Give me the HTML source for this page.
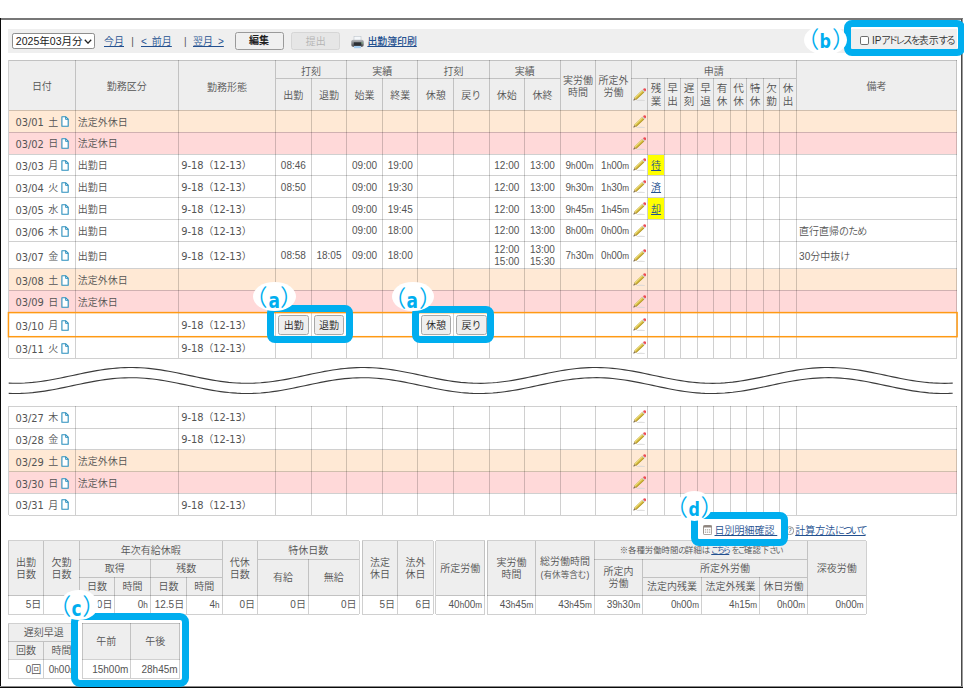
<!DOCTYPE html>
<html lang="ja"><head><meta charset="utf-8"><title>出勤簿</title>
<style>
html,body{margin:0;padding:0;background:#fff;}
body{width:964px;height:688px;position:relative;overflow:hidden;font-family:"Liberation Sans","Noto Sans CJK JP",sans-serif;font-size:10px;color:#545454;font-weight:350;}
.r{position:absolute;}
.t{position:absolute;white-space:nowrap;overflow:visible;font-size:10px;color:#545454;}
.t i{font-style:normal;font-size:8.2px;}
.t.n{font-size:10px;color:#545454;}
.dt{font-family:"DejaVu Sans","Noto Sans CJK JP",sans-serif;font-size:9.9px;letter-spacing:-0.05px;position:relative;top:0.9px;font-weight:400;}
.lk,.lk u{color:#23508f;}
.ml{display:inline-block;vertical-align:middle;line-height:12px;}
.ml.v{line-height:13.4px;font-size:10.6px;}
.ic{position:absolute;line-height:0;}
.sel{position:absolute;box-sizing:border-box;border:1px solid #8e8e8e;border-radius:2.2px;background:#fff;color:#1a1a1a;font-size:10.55px;font-weight:400;line-height:15px;padding-left:2.4px;white-space:nowrap;}
.btn{position:absolute;box-sizing:border-box;border:1px solid #9a9a9a;border-radius:2.5px;background:#f0f0f0;color:#222;font-size:10px;text-align:center;white-space:nowrap;}
.btn.dis{color:#b4b4b4;border-color:#d6d6d6;background:#e6e6e6;}
.btn.sm{border-color:#a8a8a8;background:#efefef;}
.pa{font-feature-settings:"palt";}
.k{letter-spacing:-1.3px;}
.k2{letter-spacing:-1.4px;}
.hl{position:absolute;box-sizing:border-box;border-style:solid;border-color:#00aeef;}
.lb{position:absolute;background:#fff;border-radius:50%;}
.lt{position:absolute;text-align:center;color:#00aeef;white-space:nowrap;font-size:20px;}
.lt b{font-family:"DejaVu Sans Condensed","DejaVu Sans",sans-serif;font-weight:bold;font-size:20.5px;display:inline-block;position:relative;transform:scaleX(0.92);margin:0 0.1px;}
.lt .p{font-family:"Noto Sans CJK JP",sans-serif;font-weight:350;font-size:23px;display:inline-block;position:relative;top:-1.2px;}
.lt .p.l{margin-left:-12px;}
.lt .p.r{margin-right:-12px;}
</style></head><body>
<div class="r" style="left:0.00px;top:18.00px;width:963.00px;height:2.00px;background:#777;"></div>
<div class="r" style="left:0.00px;top:18.00px;width:1.00px;height:670.00px;background:#0a0a0a;"></div>
<div class="r" style="left:961.00px;top:19.00px;width:1.00px;height:669.00px;background:#4a4a4a;"></div>
<div class="r" style="left:962.00px;top:19.00px;width:1.00px;height:669.00px;background:#9c9c9c;"></div>
<div class="r" style="left:0.00px;top:686.00px;width:963.00px;height:1.00px;background:#8a8a8a;"></div>
<div class="r" style="left:0.00px;top:687.00px;width:963.00px;height:1.00px;background:#0a0a0a;"></div>
<div class="r" style="left:8.30px;top:29.20px;width:949.00px;height:23.60px;background:#efefef;"></div>
<div class="sel" style="left:12.4px;top:33.2px;width:83px;height:15.4px"><span>2025年03月分</span><svg viewBox="0 0 9 6" width="8" height="5.4" style="position:absolute;right:2.6px;top:4.6px"><path d="M0.9 0.9 L4.5 4.6 L8.1 0.9" fill="none" stroke="#222" stroke-width="1.5"/></svg></div>
<div class="t lk" style="left:104.00px;top:33.60px;width:22.00px;height:16.00px;line-height:16.00px;text-align:left;"><u>今月</u></div>
<div class="t " style="left:131.20px;top:33.60px;width:8.00px;height:16.00px;line-height:16.00px;text-align:left;">|</div>
<div class="t lk" style="left:141.00px;top:33.60px;width:32.00px;height:16.00px;line-height:16.00px;text-align:left;word-spacing:2.2px"><u>&lt; 前月</u></div>
<div class="t " style="left:184.00px;top:33.60px;width:8.00px;height:16.00px;line-height:16.00px;text-align:left;">|</div>
<div class="t lk" style="left:193.00px;top:33.60px;width:34.00px;height:16.00px;line-height:16.00px;text-align:left;word-spacing:2.2px"><u>翌月 &gt;</u></div>
<div class="btn" style="left:234.6px;top:32.4px;width:49px;height:17.2px;line-height:16.6px"><b>編集</b></div>
<div class="btn dis" style="left:291.2px;top:32.4px;width:49.3px;height:17.2px;line-height:17.4px">提出</div>
<svg style="position:absolute;left:351px;top:35.6px" width="13" height="13" viewBox="0 0 13 13"><defs><linearGradient id="pg" x1="0" y1="0" x2="0" y2="1"><stop offset="0" stop-color="#b9bcc0"/><stop offset="1" stop-color="#474a4f"/></linearGradient></defs><rect x="3" y="0.3" width="7" height="4.2" fill="#f4f7fa" stroke="#b4bcc4" stroke-width="0.5"/><rect x="0.3" y="3.7" width="12.4" height="7" rx="1.7" fill="url(#pg)"/><rect x="2.8" y="6.3" width="7.6" height="3.3" fill="#2c2f34"/><rect x="3" y="10" width="7" height="2.2" fill="#a6cdf0"/><circle cx="11" cy="7" r="0.6" fill="#6fdc6f"/></svg>
<div class="t lk" style="left:367.40px;top:34.20px;width:60.00px;height:16.00px;line-height:16.00px;text-align:left;font-size:9.9px;font-weight:500"><u>出勤簿印刷</u></div>
<div class="r" style="left:8.75px;top:60.20px;width:948.05px;height:50.10px;background:#eeeeee;"></div>
<div class="r" style="left:8.75px;top:59.70px;width:948.05px;height:1.00px;background:rgba(0,0,0,0.185);"></div>
<div class="r" style="left:8.75px;top:109.80px;width:948.05px;height:1.00px;background:rgba(0,0,0,0.185);"></div>
<div class="r" style="left:8.25px;top:60.20px;width:1.00px;height:50.10px;background:rgba(0,0,0,0.185);"></div>
<div class="r" style="left:74.50px;top:60.20px;width:1.00px;height:50.10px;background:rgba(0,0,0,0.185);"></div>
<div class="r" style="left:178.00px;top:60.20px;width:1.00px;height:50.10px;background:rgba(0,0,0,0.185);"></div>
<div class="r" style="left:275.00px;top:60.20px;width:1.00px;height:50.10px;background:rgba(0,0,0,0.185);"></div>
<div class="r" style="left:346.20px;top:60.20px;width:1.00px;height:50.10px;background:rgba(0,0,0,0.185);"></div>
<div class="r" style="left:417.40px;top:60.20px;width:1.00px;height:50.10px;background:rgba(0,0,0,0.185);"></div>
<div class="r" style="left:488.60px;top:60.20px;width:1.00px;height:50.10px;background:rgba(0,0,0,0.185);"></div>
<div class="r" style="left:559.80px;top:60.20px;width:1.00px;height:50.10px;background:rgba(0,0,0,0.185);"></div>
<div class="r" style="left:595.30px;top:60.20px;width:1.00px;height:50.10px;background:rgba(0,0,0,0.185);"></div>
<div class="r" style="left:630.90px;top:60.20px;width:1.00px;height:50.10px;background:rgba(0,0,0,0.185);"></div>
<div class="r" style="left:795.80px;top:60.20px;width:1.00px;height:50.10px;background:rgba(0,0,0,0.185);"></div>
<div class="r" style="left:956.30px;top:60.20px;width:1.00px;height:50.10px;background:rgba(0,0,0,0.185);"></div>
<div class="r" style="left:310.70px;top:78.40px;width:1.00px;height:31.90px;background:rgba(0,0,0,0.185);"></div>
<div class="r" style="left:382.00px;top:78.40px;width:1.00px;height:31.90px;background:rgba(0,0,0,0.185);"></div>
<div class="r" style="left:453.10px;top:78.40px;width:1.00px;height:31.90px;background:rgba(0,0,0,0.185);"></div>
<div class="r" style="left:524.00px;top:78.40px;width:1.00px;height:31.90px;background:rgba(0,0,0,0.185);"></div>
<div class="r" style="left:647.40px;top:78.40px;width:1.00px;height:31.90px;background:rgba(0,0,0,0.185);"></div>
<div class="r" style="left:663.80px;top:78.40px;width:1.00px;height:31.90px;background:rgba(0,0,0,0.185);"></div>
<div class="r" style="left:680.20px;top:78.40px;width:1.00px;height:31.90px;background:rgba(0,0,0,0.185);"></div>
<div class="r" style="left:696.80px;top:78.40px;width:1.00px;height:31.90px;background:rgba(0,0,0,0.185);"></div>
<div class="r" style="left:713.10px;top:78.40px;width:1.00px;height:31.90px;background:rgba(0,0,0,0.185);"></div>
<div class="r" style="left:729.80px;top:78.40px;width:1.00px;height:31.90px;background:rgba(0,0,0,0.185);"></div>
<div class="r" style="left:746.30px;top:78.40px;width:1.00px;height:31.90px;background:rgba(0,0,0,0.185);"></div>
<div class="r" style="left:762.90px;top:78.40px;width:1.00px;height:31.90px;background:rgba(0,0,0,0.185);"></div>
<div class="r" style="left:779.30px;top:78.40px;width:1.00px;height:31.90px;background:rgba(0,0,0,0.185);"></div>
<div class="r" style="left:275.50px;top:77.90px;width:284.80px;height:1.00px;background:rgba(0,0,0,0.185);"></div>
<div class="r" style="left:631.40px;top:77.90px;width:164.90px;height:1.00px;background:rgba(0,0,0,0.185);"></div>
<div class="t " style="left:8.75px;top:62.20px;width:66.25px;height:50.10px;line-height:50.10px;text-align:center;">日付</div>
<div class="t " style="left:75.00px;top:62.20px;width:103.50px;height:50.10px;line-height:50.10px;text-align:center;">勤務区分</div>
<div class="t " style="left:178.50px;top:62.50px;width:97.00px;height:50.10px;line-height:50.10px;text-align:center;">勤務形態</div>
<div class="t " style="left:275.50px;top:62.70px;width:71.20px;height:18.20px;line-height:18.20px;text-align:center;">打刻</div>
<div class="t " style="left:346.70px;top:62.70px;width:71.20px;height:18.20px;line-height:18.20px;text-align:center;">実績</div>
<div class="t " style="left:417.90px;top:62.70px;width:71.20px;height:18.20px;line-height:18.20px;text-align:center;">打刻</div>
<div class="t " style="left:489.10px;top:62.70px;width:71.20px;height:18.20px;line-height:18.20px;text-align:center;">実績</div>
<div class="t " style="left:275.50px;top:79.70px;width:35.70px;height:31.90px;line-height:31.90px;text-align:center;">出勤</div>
<div class="t " style="left:311.20px;top:79.70px;width:35.50px;height:31.90px;line-height:31.90px;text-align:center;">退勤</div>
<div class="t " style="left:346.70px;top:79.70px;width:35.80px;height:31.90px;line-height:31.90px;text-align:center;">始業</div>
<div class="t " style="left:382.50px;top:79.70px;width:35.40px;height:31.90px;line-height:31.90px;text-align:center;">終業</div>
<div class="t " style="left:417.90px;top:79.70px;width:35.70px;height:31.90px;line-height:31.90px;text-align:center;">休憩</div>
<div class="t " style="left:453.60px;top:79.70px;width:35.50px;height:31.90px;line-height:31.90px;text-align:center;">戻り</div>
<div class="t " style="left:489.10px;top:79.70px;width:35.40px;height:31.90px;line-height:31.90px;text-align:center;">休始</div>
<div class="t " style="left:524.50px;top:79.70px;width:35.80px;height:31.90px;line-height:31.90px;text-align:center;">休終</div>
<div class="t " style="left:560.30px;top:61.20px;width:35.50px;height:50.10px;line-height:50.10px;text-align:center;"><span class="ml">実労働<br>時間</span></div>
<div class="t " style="left:595.80px;top:61.20px;width:35.60px;height:50.10px;line-height:50.10px;text-align:center;"><span class="ml">所定外<br>労働</span></div>
<div class="t " style="left:631.40px;top:62.70px;width:164.90px;height:18.20px;line-height:18.20px;text-align:center;">申請</div>
<div class="ic" style="left:632.60px;top:87.55px"><svg class="pen" viewBox="0 0 13 13" width="13" height="13"><ellipse cx="7.8" cy="12.25" rx="4.4" ry="0.6" fill="#d6d6d6"/><g transform="translate(0.5,12.4) rotate(-43.5)"><path d="M0 0 L2.7 -1.4 V1.4 Z" fill="#b2945c"/><path d="M0 0 L1.2 -0.62 V0.62 Z" fill="#444"/><rect x="2.7" y="-1.4" width="10.6" height="2.8" fill="#d8bf3f" stroke="#a48d2c" stroke-width="0.25"/><rect x="2.7" y="-1.4" width="10.6" height="0.9" fill="#ecdc82"/><rect x="2.7" y="0.6" width="10.6" height="0.8" fill="#b0962a"/><rect x="13.3" y="-1.45" width="1.2" height="2.9" fill="#c9c9c9"/><path d="M14.5 -1.45 H15.6 Q17 -1.45 17 0 Q17 1.45 15.6 1.45 H14.5 Z" fill="#ee4a52"/></g></svg></div>
<div class="t " style="left:647.90px;top:79.00px;width:16.40px;height:31.90px;line-height:31.90px;text-align:center;"><span class="ml v">残<br>業</span></div>
<div class="t " style="left:664.30px;top:79.00px;width:16.40px;height:31.90px;line-height:31.90px;text-align:center;"><span class="ml v">早<br>出</span></div>
<div class="t " style="left:680.70px;top:79.00px;width:16.60px;height:31.90px;line-height:31.90px;text-align:center;"><span class="ml v">遅<br>刻</span></div>
<div class="t " style="left:697.30px;top:79.00px;width:16.30px;height:31.90px;line-height:31.90px;text-align:center;"><span class="ml v">早<br>退</span></div>
<div class="t " style="left:713.60px;top:79.00px;width:16.70px;height:31.90px;line-height:31.90px;text-align:center;"><span class="ml v">有<br>休</span></div>
<div class="t " style="left:730.30px;top:79.00px;width:16.50px;height:31.90px;line-height:31.90px;text-align:center;"><span class="ml v">代<br>休</span></div>
<div class="t " style="left:746.80px;top:79.00px;width:16.60px;height:31.90px;line-height:31.90px;text-align:center;"><span class="ml v">特<br>休</span></div>
<div class="t " style="left:763.40px;top:79.00px;width:16.40px;height:31.90px;line-height:31.90px;text-align:center;"><span class="ml v">欠<br>勤</span></div>
<div class="t " style="left:779.80px;top:79.00px;width:16.50px;height:31.90px;line-height:31.90px;text-align:center;"><span class="ml v">休<br>出</span></div>
<div class="t " style="left:796.30px;top:62.20px;width:160.50px;height:50.10px;line-height:50.10px;text-align:center;">備考</div>
<div class="r" style="left:8.75px;top:110.30px;width:948.05px;height:21.90px;background:#ffe9d5;"></div>
<div class="t " style="left:15.55px;top:111.50px;width:60.00px;height:21.90px;line-height:21.90px;text-align:left;"><span class="dt">03/01</span><span style="margin-left:4.6px">土</span></div>
<div class="ic" style="left:61px;top:116.35px"><svg class="doc" viewBox="0 0 8 11" width="8" height="11"><path d="M0.9 0.8 H4.8 L7.2 3.2 V10.2 H0.9 Z" fill="#fff" stroke="#2a8fbd" stroke-width="1.1" stroke-linejoin="round"/><path d="M4.6 0.8 V3.4 H7.2" fill="none" stroke="#2a8fbd" stroke-width="0.9"/></svg></div>
<div class="t " style="left:77.80px;top:111.50px;width:100.00px;height:21.90px;line-height:21.90px;text-align:left;">法定外休日</div>
<div class="ic" style="left:632.60px;top:114.65px"><svg class="pen" viewBox="0 0 13 13" width="13" height="13"><ellipse cx="7.8" cy="12.25" rx="4.4" ry="0.6" fill="#d6d6d6"/><g transform="translate(0.5,12.4) rotate(-43.5)"><path d="M0 0 L2.7 -1.4 V1.4 Z" fill="#b2945c"/><path d="M0 0 L1.2 -0.62 V0.62 Z" fill="#444"/><rect x="2.7" y="-1.4" width="10.6" height="2.8" fill="#d8bf3f" stroke="#a48d2c" stroke-width="0.25"/><rect x="2.7" y="-1.4" width="10.6" height="0.9" fill="#ecdc82"/><rect x="2.7" y="0.6" width="10.6" height="0.8" fill="#b0962a"/><rect x="13.3" y="-1.45" width="1.2" height="2.9" fill="#c9c9c9"/><path d="M14.5 -1.45 H15.6 Q17 -1.45 17 0 Q17 1.45 15.6 1.45 H14.5 Z" fill="#ee4a52"/></g></svg></div>
<div class="r" style="left:8.75px;top:132.20px;width:948.05px;height:21.80px;background:#ffd9d9;"></div>
<div class="t " style="left:15.55px;top:133.40px;width:60.00px;height:21.80px;line-height:21.80px;text-align:left;"><span class="dt">03/02</span><span style="margin-left:4.6px">日</span></div>
<div class="ic" style="left:61px;top:138.20px"><svg class="doc" viewBox="0 0 8 11" width="8" height="11"><path d="M0.9 0.8 H4.8 L7.2 3.2 V10.2 H0.9 Z" fill="#fff" stroke="#2a8fbd" stroke-width="1.1" stroke-linejoin="round"/><path d="M4.6 0.8 V3.4 H7.2" fill="none" stroke="#2a8fbd" stroke-width="0.9"/></svg></div>
<div class="t " style="left:77.80px;top:133.40px;width:100.00px;height:21.80px;line-height:21.80px;text-align:left;">法定休日</div>
<div class="ic" style="left:632.60px;top:136.50px"><svg class="pen" viewBox="0 0 13 13" width="13" height="13"><ellipse cx="7.8" cy="12.25" rx="4.4" ry="0.6" fill="#d6d6d6"/><g transform="translate(0.5,12.4) rotate(-43.5)"><path d="M0 0 L2.7 -1.4 V1.4 Z" fill="#b2945c"/><path d="M0 0 L1.2 -0.62 V0.62 Z" fill="#444"/><rect x="2.7" y="-1.4" width="10.6" height="2.8" fill="#d8bf3f" stroke="#a48d2c" stroke-width="0.25"/><rect x="2.7" y="-1.4" width="10.6" height="0.9" fill="#ecdc82"/><rect x="2.7" y="0.6" width="10.6" height="0.8" fill="#b0962a"/><rect x="13.3" y="-1.45" width="1.2" height="2.9" fill="#c9c9c9"/><path d="M14.5 -1.45 H15.6 Q17 -1.45 17 0 Q17 1.45 15.6 1.45 H14.5 Z" fill="#ee4a52"/></g></svg></div>
<div class="r" style="left:8.75px;top:154.00px;width:948.05px;height:21.90px;background:#fff;"></div>
<div class="t " style="left:15.55px;top:155.20px;width:60.00px;height:21.90px;line-height:21.90px;text-align:left;"><span class="dt">03/03</span><span style="margin-left:4.6px">月</span></div>
<div class="ic" style="left:61px;top:160.05px"><svg class="doc" viewBox="0 0 8 11" width="8" height="11"><path d="M0.9 0.8 H4.8 L7.2 3.2 V10.2 H0.9 Z" fill="#fff" stroke="#2a8fbd" stroke-width="1.1" stroke-linejoin="round"/><path d="M4.6 0.8 V3.4 H7.2" fill="none" stroke="#2a8fbd" stroke-width="0.9"/></svg></div>
<div class="t " style="left:77.80px;top:155.20px;width:100.00px;height:21.90px;line-height:21.90px;text-align:left;">出勤日</div>
<div class="t " style="left:181.30px;top:154.30px;width:100.00px;height:21.90px;line-height:21.90px;text-align:left;"><span class="dt">9-18（12-13）</span></div>
<div class="ic" style="left:632.60px;top:158.35px"><svg class="pen" viewBox="0 0 13 13" width="13" height="13"><ellipse cx="7.8" cy="12.25" rx="4.4" ry="0.6" fill="#d6d6d6"/><g transform="translate(0.5,12.4) rotate(-43.5)"><path d="M0 0 L2.7 -1.4 V1.4 Z" fill="#b2945c"/><path d="M0 0 L1.2 -0.62 V0.62 Z" fill="#444"/><rect x="2.7" y="-1.4" width="10.6" height="2.8" fill="#d8bf3f" stroke="#a48d2c" stroke-width="0.25"/><rect x="2.7" y="-1.4" width="10.6" height="0.9" fill="#ecdc82"/><rect x="2.7" y="0.6" width="10.6" height="0.8" fill="#b0962a"/><rect x="13.3" y="-1.45" width="1.2" height="2.9" fill="#c9c9c9"/><path d="M14.5 -1.45 H15.6 Q17 -1.45 17 0 Q17 1.45 15.6 1.45 H14.5 Z" fill="#ee4a52"/></g></svg></div>
<div class="t n" style="left:275.50px;top:154.70px;width:35.70px;height:21.90px;line-height:21.90px;text-align:center;">08:46</div>
<div class="t n" style="left:346.70px;top:154.70px;width:35.80px;height:21.90px;line-height:21.90px;text-align:center;">09:00</div>
<div class="t n" style="left:382.50px;top:154.70px;width:35.40px;height:21.90px;line-height:21.90px;text-align:center;">19:00</div>
<div class="t n" style="left:489.10px;top:154.70px;width:35.40px;height:21.90px;line-height:21.90px;text-align:center;">12:00</div>
<div class="t n" style="left:524.50px;top:154.70px;width:35.80px;height:21.90px;line-height:21.90px;text-align:center;">13:00</div>
<div class="t n" style="left:560.30px;top:154.70px;width:33.30px;height:21.90px;line-height:21.90px;text-align:right;">9<i>h</i>00<i>m</i></div>
<div class="t n" style="left:595.80px;top:154.70px;width:33.40px;height:21.90px;line-height:21.90px;text-align:right;">1<i>h</i>00<i>m</i></div>
<div class="r" style="left:648.40px;top:154.50px;width:15.40px;height:20.90px;background:#ffff00;"></div>
<div class="t lk" style="left:647.90px;top:155.20px;width:16.40px;height:21.90px;line-height:21.90px;text-align:center;"><u>待</u></div>
<div class="r" style="left:8.75px;top:175.90px;width:948.05px;height:21.90px;background:#fff;"></div>
<div class="t " style="left:15.55px;top:177.10px;width:60.00px;height:21.90px;line-height:21.90px;text-align:left;"><span class="dt">03/04</span><span style="margin-left:4.6px">火</span></div>
<div class="ic" style="left:61px;top:181.95px"><svg class="doc" viewBox="0 0 8 11" width="8" height="11"><path d="M0.9 0.8 H4.8 L7.2 3.2 V10.2 H0.9 Z" fill="#fff" stroke="#2a8fbd" stroke-width="1.1" stroke-linejoin="round"/><path d="M4.6 0.8 V3.4 H7.2" fill="none" stroke="#2a8fbd" stroke-width="0.9"/></svg></div>
<div class="t " style="left:77.80px;top:177.10px;width:100.00px;height:21.90px;line-height:21.90px;text-align:left;">出勤日</div>
<div class="t " style="left:181.30px;top:176.20px;width:100.00px;height:21.90px;line-height:21.90px;text-align:left;"><span class="dt">9-18（12-13）</span></div>
<div class="ic" style="left:632.60px;top:180.25px"><svg class="pen" viewBox="0 0 13 13" width="13" height="13"><ellipse cx="7.8" cy="12.25" rx="4.4" ry="0.6" fill="#d6d6d6"/><g transform="translate(0.5,12.4) rotate(-43.5)"><path d="M0 0 L2.7 -1.4 V1.4 Z" fill="#b2945c"/><path d="M0 0 L1.2 -0.62 V0.62 Z" fill="#444"/><rect x="2.7" y="-1.4" width="10.6" height="2.8" fill="#d8bf3f" stroke="#a48d2c" stroke-width="0.25"/><rect x="2.7" y="-1.4" width="10.6" height="0.9" fill="#ecdc82"/><rect x="2.7" y="0.6" width="10.6" height="0.8" fill="#b0962a"/><rect x="13.3" y="-1.45" width="1.2" height="2.9" fill="#c9c9c9"/><path d="M14.5 -1.45 H15.6 Q17 -1.45 17 0 Q17 1.45 15.6 1.45 H14.5 Z" fill="#ee4a52"/></g></svg></div>
<div class="t n" style="left:275.50px;top:176.60px;width:35.70px;height:21.90px;line-height:21.90px;text-align:center;">08:50</div>
<div class="t n" style="left:346.70px;top:176.60px;width:35.80px;height:21.90px;line-height:21.90px;text-align:center;">09:00</div>
<div class="t n" style="left:382.50px;top:176.60px;width:35.40px;height:21.90px;line-height:21.90px;text-align:center;">19:30</div>
<div class="t n" style="left:489.10px;top:176.60px;width:35.40px;height:21.90px;line-height:21.90px;text-align:center;">12:00</div>
<div class="t n" style="left:524.50px;top:176.60px;width:35.80px;height:21.90px;line-height:21.90px;text-align:center;">13:00</div>
<div class="t n" style="left:560.30px;top:176.60px;width:33.30px;height:21.90px;line-height:21.90px;text-align:right;">9<i>h</i>30<i>m</i></div>
<div class="t n" style="left:595.80px;top:176.60px;width:33.40px;height:21.90px;line-height:21.90px;text-align:right;">1<i>h</i>30<i>m</i></div>
<div class="t lk" style="left:647.90px;top:177.10px;width:16.40px;height:21.90px;line-height:21.90px;text-align:center;"><u>済</u></div>
<div class="r" style="left:8.75px;top:197.80px;width:948.05px;height:21.90px;background:#fff;"></div>
<div class="t " style="left:15.55px;top:199.00px;width:60.00px;height:21.90px;line-height:21.90px;text-align:left;"><span class="dt">03/05</span><span style="margin-left:4.6px">水</span></div>
<div class="ic" style="left:61px;top:203.85px"><svg class="doc" viewBox="0 0 8 11" width="8" height="11"><path d="M0.9 0.8 H4.8 L7.2 3.2 V10.2 H0.9 Z" fill="#fff" stroke="#2a8fbd" stroke-width="1.1" stroke-linejoin="round"/><path d="M4.6 0.8 V3.4 H7.2" fill="none" stroke="#2a8fbd" stroke-width="0.9"/></svg></div>
<div class="t " style="left:77.80px;top:199.00px;width:100.00px;height:21.90px;line-height:21.90px;text-align:left;">出勤日</div>
<div class="t " style="left:181.30px;top:198.10px;width:100.00px;height:21.90px;line-height:21.90px;text-align:left;"><span class="dt">9-18（12-13）</span></div>
<div class="ic" style="left:632.60px;top:202.15px"><svg class="pen" viewBox="0 0 13 13" width="13" height="13"><ellipse cx="7.8" cy="12.25" rx="4.4" ry="0.6" fill="#d6d6d6"/><g transform="translate(0.5,12.4) rotate(-43.5)"><path d="M0 0 L2.7 -1.4 V1.4 Z" fill="#b2945c"/><path d="M0 0 L1.2 -0.62 V0.62 Z" fill="#444"/><rect x="2.7" y="-1.4" width="10.6" height="2.8" fill="#d8bf3f" stroke="#a48d2c" stroke-width="0.25"/><rect x="2.7" y="-1.4" width="10.6" height="0.9" fill="#ecdc82"/><rect x="2.7" y="0.6" width="10.6" height="0.8" fill="#b0962a"/><rect x="13.3" y="-1.45" width="1.2" height="2.9" fill="#c9c9c9"/><path d="M14.5 -1.45 H15.6 Q17 -1.45 17 0 Q17 1.45 15.6 1.45 H14.5 Z" fill="#ee4a52"/></g></svg></div>
<div class="t n" style="left:346.70px;top:198.50px;width:35.80px;height:21.90px;line-height:21.90px;text-align:center;">09:00</div>
<div class="t n" style="left:382.50px;top:198.50px;width:35.40px;height:21.90px;line-height:21.90px;text-align:center;">19:45</div>
<div class="t n" style="left:489.10px;top:198.50px;width:35.40px;height:21.90px;line-height:21.90px;text-align:center;">12:00</div>
<div class="t n" style="left:524.50px;top:198.50px;width:35.80px;height:21.90px;line-height:21.90px;text-align:center;">13:00</div>
<div class="t n" style="left:560.30px;top:198.50px;width:33.30px;height:21.90px;line-height:21.90px;text-align:right;">9<i>h</i>45<i>m</i></div>
<div class="t n" style="left:595.80px;top:198.50px;width:33.40px;height:21.90px;line-height:21.90px;text-align:right;">1<i>h</i>45<i>m</i></div>
<div class="r" style="left:648.40px;top:198.30px;width:15.40px;height:20.90px;background:#ffff00;"></div>
<div class="t lk" style="left:647.90px;top:199.00px;width:16.40px;height:21.90px;line-height:21.90px;text-align:center;"><u>却</u></div>
<div class="r" style="left:8.75px;top:219.70px;width:948.05px;height:21.80px;background:#fff;"></div>
<div class="t " style="left:15.55px;top:220.90px;width:60.00px;height:21.80px;line-height:21.80px;text-align:left;"><span class="dt">03/06</span><span style="margin-left:4.6px">木</span></div>
<div class="ic" style="left:61px;top:225.70px"><svg class="doc" viewBox="0 0 8 11" width="8" height="11"><path d="M0.9 0.8 H4.8 L7.2 3.2 V10.2 H0.9 Z" fill="#fff" stroke="#2a8fbd" stroke-width="1.1" stroke-linejoin="round"/><path d="M4.6 0.8 V3.4 H7.2" fill="none" stroke="#2a8fbd" stroke-width="0.9"/></svg></div>
<div class="t " style="left:77.80px;top:220.90px;width:100.00px;height:21.80px;line-height:21.80px;text-align:left;">出勤日</div>
<div class="t " style="left:181.30px;top:220.00px;width:100.00px;height:21.80px;line-height:21.80px;text-align:left;"><span class="dt">9-18（12-13）</span></div>
<div class="ic" style="left:632.60px;top:224.00px"><svg class="pen" viewBox="0 0 13 13" width="13" height="13"><ellipse cx="7.8" cy="12.25" rx="4.4" ry="0.6" fill="#d6d6d6"/><g transform="translate(0.5,12.4) rotate(-43.5)"><path d="M0 0 L2.7 -1.4 V1.4 Z" fill="#b2945c"/><path d="M0 0 L1.2 -0.62 V0.62 Z" fill="#444"/><rect x="2.7" y="-1.4" width="10.6" height="2.8" fill="#d8bf3f" stroke="#a48d2c" stroke-width="0.25"/><rect x="2.7" y="-1.4" width="10.6" height="0.9" fill="#ecdc82"/><rect x="2.7" y="0.6" width="10.6" height="0.8" fill="#b0962a"/><rect x="13.3" y="-1.45" width="1.2" height="2.9" fill="#c9c9c9"/><path d="M14.5 -1.45 H15.6 Q17 -1.45 17 0 Q17 1.45 15.6 1.45 H14.5 Z" fill="#ee4a52"/></g></svg></div>
<div class="t n" style="left:346.70px;top:220.40px;width:35.80px;height:21.80px;line-height:21.80px;text-align:center;">09:00</div>
<div class="t n" style="left:382.50px;top:220.40px;width:35.40px;height:21.80px;line-height:21.80px;text-align:center;">18:00</div>
<div class="t n" style="left:489.10px;top:220.40px;width:35.40px;height:21.80px;line-height:21.80px;text-align:center;">12:00</div>
<div class="t n" style="left:524.50px;top:220.40px;width:35.80px;height:21.80px;line-height:21.80px;text-align:center;">13:00</div>
<div class="t n" style="left:560.30px;top:220.40px;width:33.30px;height:21.80px;line-height:21.80px;text-align:right;">8<i>h</i>00<i>m</i></div>
<div class="t n" style="left:595.80px;top:220.40px;width:33.40px;height:21.80px;line-height:21.80px;text-align:right;">0<i>h</i>00<i>m</i></div>
<div class="t " style="left:799.10px;top:220.90px;width:150.00px;height:21.80px;line-height:21.80px;text-align:left;">直行直帰<span style="letter-spacing:-0.9px">のため</span></div>
<div class="r" style="left:8.75px;top:241.50px;width:948.05px;height:27.20px;background:#fff;"></div>
<div class="t " style="left:15.55px;top:242.70px;width:60.00px;height:27.20px;line-height:27.20px;text-align:left;"><span class="dt">03/07</span><span style="margin-left:4.6px">金</span></div>
<div class="ic" style="left:61px;top:250.20px"><svg class="doc" viewBox="0 0 8 11" width="8" height="11"><path d="M0.9 0.8 H4.8 L7.2 3.2 V10.2 H0.9 Z" fill="#fff" stroke="#2a8fbd" stroke-width="1.1" stroke-linejoin="round"/><path d="M4.6 0.8 V3.4 H7.2" fill="none" stroke="#2a8fbd" stroke-width="0.9"/></svg></div>
<div class="t " style="left:77.80px;top:242.70px;width:100.00px;height:27.20px;line-height:27.20px;text-align:left;">出勤日</div>
<div class="t " style="left:181.30px;top:241.80px;width:100.00px;height:27.20px;line-height:27.20px;text-align:left;"><span class="dt">9-18（12-13）</span></div>
<div class="ic" style="left:632.60px;top:248.50px"><svg class="pen" viewBox="0 0 13 13" width="13" height="13"><ellipse cx="7.8" cy="12.25" rx="4.4" ry="0.6" fill="#d6d6d6"/><g transform="translate(0.5,12.4) rotate(-43.5)"><path d="M0 0 L2.7 -1.4 V1.4 Z" fill="#b2945c"/><path d="M0 0 L1.2 -0.62 V0.62 Z" fill="#444"/><rect x="2.7" y="-1.4" width="10.6" height="2.8" fill="#d8bf3f" stroke="#a48d2c" stroke-width="0.25"/><rect x="2.7" y="-1.4" width="10.6" height="0.9" fill="#ecdc82"/><rect x="2.7" y="0.6" width="10.6" height="0.8" fill="#b0962a"/><rect x="13.3" y="-1.45" width="1.2" height="2.9" fill="#c9c9c9"/><path d="M14.5 -1.45 H15.6 Q17 -1.45 17 0 Q17 1.45 15.6 1.45 H14.5 Z" fill="#ee4a52"/></g></svg></div>
<div class="t n" style="left:275.50px;top:242.20px;width:35.70px;height:27.20px;line-height:27.20px;text-align:center;">08:58</div>
<div class="t n" style="left:311.20px;top:242.20px;width:35.50px;height:27.20px;line-height:27.20px;text-align:center;">18:05</div>
<div class="t n" style="left:346.70px;top:242.20px;width:35.80px;height:27.20px;line-height:27.20px;text-align:center;">09:00</div>
<div class="t n" style="left:382.50px;top:242.20px;width:35.40px;height:27.20px;line-height:27.20px;text-align:center;">18:00</div>
<div class="t n" style="left:489.10px;top:242.70px;width:35.40px;height:25.20px;line-height:25.20px;text-align:center;line-height:12.2px;padding-top:1.2px">12:00<br>15:00</div>
<div class="t n" style="left:524.50px;top:242.70px;width:35.80px;height:25.20px;line-height:25.20px;text-align:center;line-height:12.2px;padding-top:1.2px">13:00<br>15:30</div>
<div class="t n" style="left:560.30px;top:242.20px;width:33.30px;height:27.20px;line-height:27.20px;text-align:right;">7<i>h</i>30<i>m</i></div>
<div class="t n" style="left:595.80px;top:242.20px;width:33.40px;height:27.20px;line-height:27.20px;text-align:right;">0<i>h</i>00<i>m</i></div>
<div class="t " style="left:799.10px;top:242.70px;width:150.00px;height:27.20px;line-height:27.20px;text-align:left;">30分中抜け</div>
<div class="r" style="left:8.75px;top:268.70px;width:948.05px;height:21.70px;background:#ffe9d5;"></div>
<div class="t " style="left:15.55px;top:269.90px;width:60.00px;height:21.70px;line-height:21.70px;text-align:left;"><span class="dt">03/08</span><span style="margin-left:4.6px">土</span></div>
<div class="ic" style="left:61px;top:274.65px"><svg class="doc" viewBox="0 0 8 11" width="8" height="11"><path d="M0.9 0.8 H4.8 L7.2 3.2 V10.2 H0.9 Z" fill="#fff" stroke="#2a8fbd" stroke-width="1.1" stroke-linejoin="round"/><path d="M4.6 0.8 V3.4 H7.2" fill="none" stroke="#2a8fbd" stroke-width="0.9"/></svg></div>
<div class="t " style="left:77.80px;top:269.90px;width:100.00px;height:21.70px;line-height:21.70px;text-align:left;">法定外休日</div>
<div class="ic" style="left:632.60px;top:272.95px"><svg class="pen" viewBox="0 0 13 13" width="13" height="13"><ellipse cx="7.8" cy="12.25" rx="4.4" ry="0.6" fill="#d6d6d6"/><g transform="translate(0.5,12.4) rotate(-43.5)"><path d="M0 0 L2.7 -1.4 V1.4 Z" fill="#b2945c"/><path d="M0 0 L1.2 -0.62 V0.62 Z" fill="#444"/><rect x="2.7" y="-1.4" width="10.6" height="2.8" fill="#d8bf3f" stroke="#a48d2c" stroke-width="0.25"/><rect x="2.7" y="-1.4" width="10.6" height="0.9" fill="#ecdc82"/><rect x="2.7" y="0.6" width="10.6" height="0.8" fill="#b0962a"/><rect x="13.3" y="-1.45" width="1.2" height="2.9" fill="#c9c9c9"/><path d="M14.5 -1.45 H15.6 Q17 -1.45 17 0 Q17 1.45 15.6 1.45 H14.5 Z" fill="#ee4a52"/></g></svg></div>
<div class="r" style="left:8.75px;top:290.40px;width:948.05px;height:22.10px;background:#ffd9d9;"></div>
<div class="t " style="left:15.55px;top:291.60px;width:60.00px;height:22.10px;line-height:22.10px;text-align:left;"><span class="dt">03/09</span><span style="margin-left:4.6px">日</span></div>
<div class="ic" style="left:61px;top:296.55px"><svg class="doc" viewBox="0 0 8 11" width="8" height="11"><path d="M0.9 0.8 H4.8 L7.2 3.2 V10.2 H0.9 Z" fill="#fff" stroke="#2a8fbd" stroke-width="1.1" stroke-linejoin="round"/><path d="M4.6 0.8 V3.4 H7.2" fill="none" stroke="#2a8fbd" stroke-width="0.9"/></svg></div>
<div class="t " style="left:77.80px;top:291.60px;width:100.00px;height:22.10px;line-height:22.10px;text-align:left;">法定休日</div>
<div class="ic" style="left:632.60px;top:294.85px"><svg class="pen" viewBox="0 0 13 13" width="13" height="13"><ellipse cx="7.8" cy="12.25" rx="4.4" ry="0.6" fill="#d6d6d6"/><g transform="translate(0.5,12.4) rotate(-43.5)"><path d="M0 0 L2.7 -1.4 V1.4 Z" fill="#b2945c"/><path d="M0 0 L1.2 -0.62 V0.62 Z" fill="#444"/><rect x="2.7" y="-1.4" width="10.6" height="2.8" fill="#d8bf3f" stroke="#a48d2c" stroke-width="0.25"/><rect x="2.7" y="-1.4" width="10.6" height="0.9" fill="#ecdc82"/><rect x="2.7" y="0.6" width="10.6" height="0.8" fill="#b0962a"/><rect x="13.3" y="-1.45" width="1.2" height="2.9" fill="#c9c9c9"/><path d="M14.5 -1.45 H15.6 Q17 -1.45 17 0 Q17 1.45 15.6 1.45 H14.5 Z" fill="#ee4a52"/></g></svg></div>
<div class="r" style="left:8.75px;top:312.50px;width:948.05px;height:24.10px;background:#fff;"></div>
<div class="t " style="left:15.55px;top:313.70px;width:60.00px;height:24.10px;line-height:24.10px;text-align:left;"><span class="dt">03/10</span><span style="margin-left:4.6px">月</span></div>
<div class="ic" style="left:61px;top:319.65px"><svg class="doc" viewBox="0 0 8 11" width="8" height="11"><path d="M0.9 0.8 H4.8 L7.2 3.2 V10.2 H0.9 Z" fill="#fff" stroke="#2a8fbd" stroke-width="1.1" stroke-linejoin="round"/><path d="M4.6 0.8 V3.4 H7.2" fill="none" stroke="#2a8fbd" stroke-width="0.9"/></svg></div>
<div class="t " style="left:181.30px;top:312.80px;width:100.00px;height:24.10px;line-height:24.10px;text-align:left;"><span class="dt">9-18（12-13）</span></div>
<div class="ic" style="left:632.60px;top:317.95px"><svg class="pen" viewBox="0 0 13 13" width="13" height="13"><ellipse cx="7.8" cy="12.25" rx="4.4" ry="0.6" fill="#d6d6d6"/><g transform="translate(0.5,12.4) rotate(-43.5)"><path d="M0 0 L2.7 -1.4 V1.4 Z" fill="#b2945c"/><path d="M0 0 L1.2 -0.62 V0.62 Z" fill="#444"/><rect x="2.7" y="-1.4" width="10.6" height="2.8" fill="#d8bf3f" stroke="#a48d2c" stroke-width="0.25"/><rect x="2.7" y="-1.4" width="10.6" height="0.9" fill="#ecdc82"/><rect x="2.7" y="0.6" width="10.6" height="0.8" fill="#b0962a"/><rect x="13.3" y="-1.45" width="1.2" height="2.9" fill="#c9c9c9"/><path d="M14.5 -1.45 H15.6 Q17 -1.45 17 0 Q17 1.45 15.6 1.45 H14.5 Z" fill="#ee4a52"/></g></svg></div>
<div class="r" style="left:8.75px;top:336.60px;width:948.05px;height:21.70px;background:#fff;"></div>
<div class="t " style="left:15.55px;top:337.80px;width:60.00px;height:21.70px;line-height:21.70px;text-align:left;"><span class="dt">03/11</span><span style="margin-left:4.6px">火</span></div>
<div class="ic" style="left:61px;top:342.55px"><svg class="doc" viewBox="0 0 8 11" width="8" height="11"><path d="M0.9 0.8 H4.8 L7.2 3.2 V10.2 H0.9 Z" fill="#fff" stroke="#2a8fbd" stroke-width="1.1" stroke-linejoin="round"/><path d="M4.6 0.8 V3.4 H7.2" fill="none" stroke="#2a8fbd" stroke-width="0.9"/></svg></div>
<div class="t " style="left:181.30px;top:336.90px;width:100.00px;height:21.70px;line-height:21.70px;text-align:left;"><span class="dt">9-18（12-13）</span></div>
<div class="ic" style="left:632.60px;top:340.85px"><svg class="pen" viewBox="0 0 13 13" width="13" height="13"><ellipse cx="7.8" cy="12.25" rx="4.4" ry="0.6" fill="#d6d6d6"/><g transform="translate(0.5,12.4) rotate(-43.5)"><path d="M0 0 L2.7 -1.4 V1.4 Z" fill="#b2945c"/><path d="M0 0 L1.2 -0.62 V0.62 Z" fill="#444"/><rect x="2.7" y="-1.4" width="10.6" height="2.8" fill="#d8bf3f" stroke="#a48d2c" stroke-width="0.25"/><rect x="2.7" y="-1.4" width="10.6" height="0.9" fill="#ecdc82"/><rect x="2.7" y="0.6" width="10.6" height="0.8" fill="#b0962a"/><rect x="13.3" y="-1.45" width="1.2" height="2.9" fill="#c9c9c9"/><path d="M14.5 -1.45 H15.6 Q17 -1.45 17 0 Q17 1.45 15.6 1.45 H14.5 Z" fill="#ee4a52"/></g></svg></div>
<div class="r" style="left:8.75px;top:109.80px;width:948.05px;height:1.00px;background:rgba(0,0,0,0.185);"></div>
<div class="r" style="left:8.75px;top:131.70px;width:948.05px;height:1.00px;background:rgba(0,0,0,0.185);"></div>
<div class="r" style="left:8.75px;top:153.50px;width:948.05px;height:1.00px;background:rgba(0,0,0,0.185);"></div>
<div class="r" style="left:8.75px;top:175.40px;width:948.05px;height:1.00px;background:rgba(0,0,0,0.185);"></div>
<div class="r" style="left:8.75px;top:197.30px;width:948.05px;height:1.00px;background:rgba(0,0,0,0.185);"></div>
<div class="r" style="left:8.75px;top:219.20px;width:948.05px;height:1.00px;background:rgba(0,0,0,0.185);"></div>
<div class="r" style="left:8.75px;top:241.00px;width:948.05px;height:1.00px;background:rgba(0,0,0,0.185);"></div>
<div class="r" style="left:8.75px;top:268.20px;width:948.05px;height:1.00px;background:rgba(0,0,0,0.185);"></div>
<div class="r" style="left:8.75px;top:289.90px;width:948.05px;height:1.00px;background:rgba(0,0,0,0.185);"></div>
<div class="r" style="left:8.75px;top:312.00px;width:948.05px;height:1.00px;background:rgba(0,0,0,0.185);"></div>
<div class="r" style="left:8.75px;top:336.10px;width:948.05px;height:1.00px;background:rgba(0,0,0,0.185);"></div>
<div class="r" style="left:8.75px;top:357.80px;width:948.05px;height:1.00px;background:rgba(0,0,0,0.185);"></div>
<div class="r" style="left:8.25px;top:110.30px;width:1.00px;height:248.00px;background:rgba(0,0,0,0.185);"></div>
<div class="r" style="left:74.50px;top:110.30px;width:1.00px;height:248.00px;background:rgba(0,0,0,0.185);"></div>
<div class="r" style="left:178.00px;top:110.30px;width:1.00px;height:248.00px;background:rgba(0,0,0,0.185);"></div>
<div class="r" style="left:275.00px;top:110.30px;width:1.00px;height:248.00px;background:rgba(0,0,0,0.185);"></div>
<div class="r" style="left:310.70px;top:110.30px;width:1.00px;height:248.00px;background:rgba(0,0,0,0.185);"></div>
<div class="r" style="left:346.20px;top:110.30px;width:1.00px;height:248.00px;background:rgba(0,0,0,0.185);"></div>
<div class="r" style="left:382.00px;top:110.30px;width:1.00px;height:248.00px;background:rgba(0,0,0,0.185);"></div>
<div class="r" style="left:417.40px;top:110.30px;width:1.00px;height:248.00px;background:rgba(0,0,0,0.185);"></div>
<div class="r" style="left:453.10px;top:110.30px;width:1.00px;height:248.00px;background:rgba(0,0,0,0.185);"></div>
<div class="r" style="left:488.60px;top:110.30px;width:1.00px;height:248.00px;background:rgba(0,0,0,0.185);"></div>
<div class="r" style="left:524.00px;top:110.30px;width:1.00px;height:248.00px;background:rgba(0,0,0,0.185);"></div>
<div class="r" style="left:559.80px;top:110.30px;width:1.00px;height:248.00px;background:rgba(0,0,0,0.185);"></div>
<div class="r" style="left:595.30px;top:110.30px;width:1.00px;height:248.00px;background:rgba(0,0,0,0.185);"></div>
<div class="r" style="left:630.90px;top:110.30px;width:1.00px;height:248.00px;background:rgba(0,0,0,0.185);"></div>
<div class="r" style="left:647.40px;top:110.30px;width:1.00px;height:248.00px;background:rgba(0,0,0,0.185);"></div>
<div class="r" style="left:663.80px;top:110.30px;width:1.00px;height:248.00px;background:rgba(0,0,0,0.185);"></div>
<div class="r" style="left:680.20px;top:110.30px;width:1.00px;height:248.00px;background:rgba(0,0,0,0.185);"></div>
<div class="r" style="left:696.80px;top:110.30px;width:1.00px;height:248.00px;background:rgba(0,0,0,0.185);"></div>
<div class="r" style="left:713.10px;top:110.30px;width:1.00px;height:248.00px;background:rgba(0,0,0,0.185);"></div>
<div class="r" style="left:729.80px;top:110.30px;width:1.00px;height:248.00px;background:rgba(0,0,0,0.185);"></div>
<div class="r" style="left:746.30px;top:110.30px;width:1.00px;height:248.00px;background:rgba(0,0,0,0.185);"></div>
<div class="r" style="left:762.90px;top:110.30px;width:1.00px;height:248.00px;background:rgba(0,0,0,0.185);"></div>
<div class="r" style="left:779.30px;top:110.30px;width:1.00px;height:248.00px;background:rgba(0,0,0,0.185);"></div>
<div class="r" style="left:795.80px;top:110.30px;width:1.00px;height:248.00px;background:rgba(0,0,0,0.185);"></div>
<div class="r" style="left:956.30px;top:110.30px;width:1.00px;height:248.00px;background:rgba(0,0,0,0.185);"></div>
<div class="r" style="left:8.75px;top:406.00px;width:948.05px;height:22.00px;background:#fff;"></div>
<div class="t " style="left:15.55px;top:407.20px;width:60.00px;height:22.00px;line-height:22.00px;text-align:left;"><span class="dt">03/27</span><span style="margin-left:4.6px">木</span></div>
<div class="ic" style="left:61px;top:412.10px"><svg class="doc" viewBox="0 0 8 11" width="8" height="11"><path d="M0.9 0.8 H4.8 L7.2 3.2 V10.2 H0.9 Z" fill="#fff" stroke="#2a8fbd" stroke-width="1.1" stroke-linejoin="round"/><path d="M4.6 0.8 V3.4 H7.2" fill="none" stroke="#2a8fbd" stroke-width="0.9"/></svg></div>
<div class="t " style="left:181.30px;top:406.30px;width:100.00px;height:22.00px;line-height:22.00px;text-align:left;"><span class="dt">9-18（12-13）</span></div>
<div class="ic" style="left:632.60px;top:410.40px"><svg class="pen" viewBox="0 0 13 13" width="13" height="13"><ellipse cx="7.8" cy="12.25" rx="4.4" ry="0.6" fill="#d6d6d6"/><g transform="translate(0.5,12.4) rotate(-43.5)"><path d="M0 0 L2.7 -1.4 V1.4 Z" fill="#b2945c"/><path d="M0 0 L1.2 -0.62 V0.62 Z" fill="#444"/><rect x="2.7" y="-1.4" width="10.6" height="2.8" fill="#d8bf3f" stroke="#a48d2c" stroke-width="0.25"/><rect x="2.7" y="-1.4" width="10.6" height="0.9" fill="#ecdc82"/><rect x="2.7" y="0.6" width="10.6" height="0.8" fill="#b0962a"/><rect x="13.3" y="-1.45" width="1.2" height="2.9" fill="#c9c9c9"/><path d="M14.5 -1.45 H15.6 Q17 -1.45 17 0 Q17 1.45 15.6 1.45 H14.5 Z" fill="#ee4a52"/></g></svg></div>
<div class="r" style="left:8.75px;top:428.00px;width:948.05px;height:21.80px;background:#fff;"></div>
<div class="t " style="left:15.55px;top:429.20px;width:60.00px;height:21.80px;line-height:21.80px;text-align:left;"><span class="dt">03/28</span><span style="margin-left:4.6px">金</span></div>
<div class="ic" style="left:61px;top:434.00px"><svg class="doc" viewBox="0 0 8 11" width="8" height="11"><path d="M0.9 0.8 H4.8 L7.2 3.2 V10.2 H0.9 Z" fill="#fff" stroke="#2a8fbd" stroke-width="1.1" stroke-linejoin="round"/><path d="M4.6 0.8 V3.4 H7.2" fill="none" stroke="#2a8fbd" stroke-width="0.9"/></svg></div>
<div class="t " style="left:181.30px;top:428.30px;width:100.00px;height:21.80px;line-height:21.80px;text-align:left;"><span class="dt">9-18（12-13）</span></div>
<div class="ic" style="left:632.60px;top:432.30px"><svg class="pen" viewBox="0 0 13 13" width="13" height="13"><ellipse cx="7.8" cy="12.25" rx="4.4" ry="0.6" fill="#d6d6d6"/><g transform="translate(0.5,12.4) rotate(-43.5)"><path d="M0 0 L2.7 -1.4 V1.4 Z" fill="#b2945c"/><path d="M0 0 L1.2 -0.62 V0.62 Z" fill="#444"/><rect x="2.7" y="-1.4" width="10.6" height="2.8" fill="#d8bf3f" stroke="#a48d2c" stroke-width="0.25"/><rect x="2.7" y="-1.4" width="10.6" height="0.9" fill="#ecdc82"/><rect x="2.7" y="0.6" width="10.6" height="0.8" fill="#b0962a"/><rect x="13.3" y="-1.45" width="1.2" height="2.9" fill="#c9c9c9"/><path d="M14.5 -1.45 H15.6 Q17 -1.45 17 0 Q17 1.45 15.6 1.45 H14.5 Z" fill="#ee4a52"/></g></svg></div>
<div class="r" style="left:8.75px;top:449.80px;width:948.05px;height:21.80px;background:#ffe9d5;"></div>
<div class="t " style="left:15.55px;top:451.00px;width:60.00px;height:21.80px;line-height:21.80px;text-align:left;"><span class="dt">03/29</span><span style="margin-left:4.6px">土</span></div>
<div class="ic" style="left:61px;top:455.80px"><svg class="doc" viewBox="0 0 8 11" width="8" height="11"><path d="M0.9 0.8 H4.8 L7.2 3.2 V10.2 H0.9 Z" fill="#fff" stroke="#2a8fbd" stroke-width="1.1" stroke-linejoin="round"/><path d="M4.6 0.8 V3.4 H7.2" fill="none" stroke="#2a8fbd" stroke-width="0.9"/></svg></div>
<div class="t " style="left:77.80px;top:451.00px;width:100.00px;height:21.80px;line-height:21.80px;text-align:left;">法定外休日</div>
<div class="ic" style="left:632.60px;top:454.10px"><svg class="pen" viewBox="0 0 13 13" width="13" height="13"><ellipse cx="7.8" cy="12.25" rx="4.4" ry="0.6" fill="#d6d6d6"/><g transform="translate(0.5,12.4) rotate(-43.5)"><path d="M0 0 L2.7 -1.4 V1.4 Z" fill="#b2945c"/><path d="M0 0 L1.2 -0.62 V0.62 Z" fill="#444"/><rect x="2.7" y="-1.4" width="10.6" height="2.8" fill="#d8bf3f" stroke="#a48d2c" stroke-width="0.25"/><rect x="2.7" y="-1.4" width="10.6" height="0.9" fill="#ecdc82"/><rect x="2.7" y="0.6" width="10.6" height="0.8" fill="#b0962a"/><rect x="13.3" y="-1.45" width="1.2" height="2.9" fill="#c9c9c9"/><path d="M14.5 -1.45 H15.6 Q17 -1.45 17 0 Q17 1.45 15.6 1.45 H14.5 Z" fill="#ee4a52"/></g></svg></div>
<div class="r" style="left:8.75px;top:471.60px;width:948.05px;height:21.80px;background:#ffd9d9;"></div>
<div class="t " style="left:15.55px;top:472.80px;width:60.00px;height:21.80px;line-height:21.80px;text-align:left;"><span class="dt">03/30</span><span style="margin-left:4.6px">日</span></div>
<div class="ic" style="left:61px;top:477.60px"><svg class="doc" viewBox="0 0 8 11" width="8" height="11"><path d="M0.9 0.8 H4.8 L7.2 3.2 V10.2 H0.9 Z" fill="#fff" stroke="#2a8fbd" stroke-width="1.1" stroke-linejoin="round"/><path d="M4.6 0.8 V3.4 H7.2" fill="none" stroke="#2a8fbd" stroke-width="0.9"/></svg></div>
<div class="t " style="left:77.80px;top:472.80px;width:100.00px;height:21.80px;line-height:21.80px;text-align:left;">法定休日</div>
<div class="ic" style="left:632.60px;top:475.90px"><svg class="pen" viewBox="0 0 13 13" width="13" height="13"><ellipse cx="7.8" cy="12.25" rx="4.4" ry="0.6" fill="#d6d6d6"/><g transform="translate(0.5,12.4) rotate(-43.5)"><path d="M0 0 L2.7 -1.4 V1.4 Z" fill="#b2945c"/><path d="M0 0 L1.2 -0.62 V0.62 Z" fill="#444"/><rect x="2.7" y="-1.4" width="10.6" height="2.8" fill="#d8bf3f" stroke="#a48d2c" stroke-width="0.25"/><rect x="2.7" y="-1.4" width="10.6" height="0.9" fill="#ecdc82"/><rect x="2.7" y="0.6" width="10.6" height="0.8" fill="#b0962a"/><rect x="13.3" y="-1.45" width="1.2" height="2.9" fill="#c9c9c9"/><path d="M14.5 -1.45 H15.6 Q17 -1.45 17 0 Q17 1.45 15.6 1.45 H14.5 Z" fill="#ee4a52"/></g></svg></div>
<div class="r" style="left:8.75px;top:493.40px;width:948.05px;height:21.80px;background:#fff;"></div>
<div class="t " style="left:15.55px;top:494.60px;width:60.00px;height:21.80px;line-height:21.80px;text-align:left;"><span class="dt">03/31</span><span style="margin-left:4.6px">月</span></div>
<div class="ic" style="left:61px;top:499.40px"><svg class="doc" viewBox="0 0 8 11" width="8" height="11"><path d="M0.9 0.8 H4.8 L7.2 3.2 V10.2 H0.9 Z" fill="#fff" stroke="#2a8fbd" stroke-width="1.1" stroke-linejoin="round"/><path d="M4.6 0.8 V3.4 H7.2" fill="none" stroke="#2a8fbd" stroke-width="0.9"/></svg></div>
<div class="t " style="left:181.30px;top:493.70px;width:100.00px;height:21.80px;line-height:21.80px;text-align:left;"><span class="dt">9-18（12-13）</span></div>
<div class="ic" style="left:632.60px;top:497.70px"><svg class="pen" viewBox="0 0 13 13" width="13" height="13"><ellipse cx="7.8" cy="12.25" rx="4.4" ry="0.6" fill="#d6d6d6"/><g transform="translate(0.5,12.4) rotate(-43.5)"><path d="M0 0 L2.7 -1.4 V1.4 Z" fill="#b2945c"/><path d="M0 0 L1.2 -0.62 V0.62 Z" fill="#444"/><rect x="2.7" y="-1.4" width="10.6" height="2.8" fill="#d8bf3f" stroke="#a48d2c" stroke-width="0.25"/><rect x="2.7" y="-1.4" width="10.6" height="0.9" fill="#ecdc82"/><rect x="2.7" y="0.6" width="10.6" height="0.8" fill="#b0962a"/><rect x="13.3" y="-1.45" width="1.2" height="2.9" fill="#c9c9c9"/><path d="M14.5 -1.45 H15.6 Q17 -1.45 17 0 Q17 1.45 15.6 1.45 H14.5 Z" fill="#ee4a52"/></g></svg></div>
<div class="r" style="left:8.75px;top:405.50px;width:948.05px;height:1.00px;background:rgba(0,0,0,0.185);"></div>
<div class="r" style="left:8.75px;top:427.50px;width:948.05px;height:1.00px;background:rgba(0,0,0,0.185);"></div>
<div class="r" style="left:8.75px;top:449.30px;width:948.05px;height:1.00px;background:rgba(0,0,0,0.185);"></div>
<div class="r" style="left:8.75px;top:471.10px;width:948.05px;height:1.00px;background:rgba(0,0,0,0.185);"></div>
<div class="r" style="left:8.75px;top:492.90px;width:948.05px;height:1.00px;background:rgba(0,0,0,0.185);"></div>
<div class="r" style="left:8.75px;top:514.70px;width:948.05px;height:1.00px;background:rgba(0,0,0,0.185);"></div>
<div class="r" style="left:8.25px;top:406.00px;width:1.00px;height:109.20px;background:rgba(0,0,0,0.185);"></div>
<div class="r" style="left:74.50px;top:406.00px;width:1.00px;height:109.20px;background:rgba(0,0,0,0.185);"></div>
<div class="r" style="left:178.00px;top:406.00px;width:1.00px;height:109.20px;background:rgba(0,0,0,0.185);"></div>
<div class="r" style="left:275.00px;top:406.00px;width:1.00px;height:109.20px;background:rgba(0,0,0,0.185);"></div>
<div class="r" style="left:310.70px;top:406.00px;width:1.00px;height:109.20px;background:rgba(0,0,0,0.185);"></div>
<div class="r" style="left:346.20px;top:406.00px;width:1.00px;height:109.20px;background:rgba(0,0,0,0.185);"></div>
<div class="r" style="left:382.00px;top:406.00px;width:1.00px;height:109.20px;background:rgba(0,0,0,0.185);"></div>
<div class="r" style="left:417.40px;top:406.00px;width:1.00px;height:109.20px;background:rgba(0,0,0,0.185);"></div>
<div class="r" style="left:453.10px;top:406.00px;width:1.00px;height:109.20px;background:rgba(0,0,0,0.185);"></div>
<div class="r" style="left:488.60px;top:406.00px;width:1.00px;height:109.20px;background:rgba(0,0,0,0.185);"></div>
<div class="r" style="left:524.00px;top:406.00px;width:1.00px;height:109.20px;background:rgba(0,0,0,0.185);"></div>
<div class="r" style="left:559.80px;top:406.00px;width:1.00px;height:109.20px;background:rgba(0,0,0,0.185);"></div>
<div class="r" style="left:595.30px;top:406.00px;width:1.00px;height:109.20px;background:rgba(0,0,0,0.185);"></div>
<div class="r" style="left:630.90px;top:406.00px;width:1.00px;height:109.20px;background:rgba(0,0,0,0.185);"></div>
<div class="r" style="left:647.40px;top:406.00px;width:1.00px;height:109.20px;background:rgba(0,0,0,0.185);"></div>
<div class="r" style="left:663.80px;top:406.00px;width:1.00px;height:109.20px;background:rgba(0,0,0,0.185);"></div>
<div class="r" style="left:680.20px;top:406.00px;width:1.00px;height:109.20px;background:rgba(0,0,0,0.185);"></div>
<div class="r" style="left:696.80px;top:406.00px;width:1.00px;height:109.20px;background:rgba(0,0,0,0.185);"></div>
<div class="r" style="left:713.10px;top:406.00px;width:1.00px;height:109.20px;background:rgba(0,0,0,0.185);"></div>
<div class="r" style="left:729.80px;top:406.00px;width:1.00px;height:109.20px;background:rgba(0,0,0,0.185);"></div>
<div class="r" style="left:746.30px;top:406.00px;width:1.00px;height:109.20px;background:rgba(0,0,0,0.185);"></div>
<div class="r" style="left:762.90px;top:406.00px;width:1.00px;height:109.20px;background:rgba(0,0,0,0.185);"></div>
<div class="r" style="left:779.30px;top:406.00px;width:1.00px;height:109.20px;background:rgba(0,0,0,0.185);"></div>
<div class="r" style="left:795.80px;top:406.00px;width:1.00px;height:109.20px;background:rgba(0,0,0,0.185);"></div>
<div class="r" style="left:956.30px;top:406.00px;width:1.00px;height:109.20px;background:rgba(0,0,0,0.185);"></div>
<svg style="position:absolute;left:0;top:300px" width="964" height="50" viewBox="0 300 964 50"><rect x="8.45" y="312.60" width="948.65" height="24.10" fill="none" stroke="#ff9a14" stroke-width="1.5"/></svg>
<div class="btn sm" style="left:278.4px;top:315.3px;width:30.5px;height:19.4px;line-height:19.6px">出勤</div>
<div class="btn sm" style="left:313.8px;top:315.3px;width:30.6px;height:19.4px;line-height:19.6px">退勤</div>
<div class="btn sm" style="left:420.8px;top:315.3px;width:30.4px;height:19.4px;line-height:19.6px">休憩</div>
<div class="btn sm" style="left:456.4px;top:315.3px;width:30.4px;height:19.4px;line-height:19.6px">戻り</div>
<svg style="position:absolute;left:0;top:360px" width="964" height="44" viewBox="0 360 964 44"><polygon points="8.7,383.19 12.7,383.29 16.7,383.29 20.7,383.20 24.7,383.02 28.7,382.75 32.7,382.40 36.7,381.96 40.7,381.45 44.7,380.86 48.7,380.21 52.7,379.51 56.7,378.76 60.7,377.96 64.7,377.14 68.7,376.30 72.7,375.45 76.7,374.59 80.7,373.75 84.7,372.93 88.7,372.13 92.7,371.37 96.7,370.66 100.7,370.01 104.7,369.42 108.7,368.89 112.7,368.45 116.7,368.08 120.7,367.80 124.7,367.61 128.7,367.52 132.7,367.51 136.7,367.59 140.7,367.77 144.7,368.04 148.7,368.39 152.7,368.82 156.7,369.33 160.7,369.91 164.7,370.56 168.7,371.26 172.7,372.01 176.7,372.80 180.7,373.63 184.7,374.47 188.7,375.32 192.7,376.17 196.7,377.02 200.7,377.84 204.7,378.64 208.7,379.40 212.7,380.11 216.7,380.77 220.7,381.36 224.7,381.89 228.7,382.34 232.7,382.70 236.7,382.99 240.7,383.18 244.7,383.28 248.7,383.29 252.7,383.21 256.7,383.04 260.7,382.78 264.7,382.43 268.7,382.00 272.7,381.49 276.7,380.91 280.7,380.26 284.7,379.56 288.7,378.81 292.7,378.03 296.7,377.21 300.7,376.36 304.7,375.51 308.7,374.66 312.7,373.81 316.7,372.99 320.7,372.19 324.7,371.43 328.7,370.71 332.7,370.05 336.7,369.46 340.7,368.93 344.7,368.48 348.7,368.11 352.7,367.82 356.7,367.63 360.7,367.52 364.7,367.51 368.7,367.58 372.7,367.75 376.7,368.01 380.7,368.36 384.7,368.79 388.7,369.29 392.7,369.87 396.7,370.51 400.7,371.21 404.7,371.96 408.7,372.74 412.7,373.56 416.7,374.40 420.7,375.26 424.7,376.11 428.7,376.95 432.7,377.78 436.7,378.58 440.7,379.34 444.7,380.06 448.7,380.72 452.7,381.32 456.7,381.85 460.7,382.31 464.7,382.68 468.7,382.97 472.7,383.17 476.7,383.28 480.7,383.30 484.7,383.22 488.7,383.05 492.7,382.80 496.7,382.46 500.7,382.03 504.7,381.53 508.7,380.95 512.7,380.31 516.7,379.62 520.7,378.87 524.7,378.09 528.7,377.27 532.7,376.43 536.7,375.58 540.7,374.72 544.7,373.88 548.7,373.05 552.7,372.25 556.7,371.48 560.7,370.77 564.7,370.10 568.7,369.50 572.7,368.97 576.7,368.51 580.7,368.13 584.7,367.84 588.7,367.64 592.7,367.52 596.7,367.50 600.7,367.58 604.7,367.74 608.7,367.99 612.7,368.33 616.7,368.75 620.7,369.25 624.7,369.82 628.7,370.46 632.7,371.15 636.7,371.90 640.7,372.68 644.7,373.50 648.7,374.34 652.7,375.19 656.7,376.05 660.7,376.89 664.7,377.72 668.7,378.52 672.7,379.29 676.7,380.01 680.7,380.67 684.7,381.28 688.7,381.81 692.7,382.27 696.7,382.65 700.7,382.95 704.7,383.16 708.7,383.27 712.7,383.30 716.7,383.23 720.7,383.07 724.7,382.82 728.7,382.48 732.7,382.07 736.7,381.57 740.7,381.00 744.7,380.36 748.7,379.67 752.7,378.93 756.7,378.15 760.7,377.33 764.7,376.49 768.7,375.64 772.7,374.79 776.7,373.94 780.7,373.11 784.7,372.31 788.7,371.54 792.7,370.82 796.7,370.15 800.7,369.54 804.7,369.00 808.7,368.54 812.7,368.16 816.7,367.86 820.7,367.65 824.7,367.53 828.7,367.50 832.7,367.57 836.7,367.72 840.7,367.97 844.7,368.30 848.7,368.72 852.7,369.21 856.7,369.78 860.7,370.41 864.7,371.10 868.7,371.84 872.7,372.62 876.7,373.44 880.7,374.28 884.7,375.13 888.7,375.98 892.7,376.83 896.7,377.66 900.7,378.46 904.7,379.23 908.7,379.96 912.7,380.63 916.7,381.24 920.7,381.78 924.7,382.24 928.7,382.63 932.7,382.93 936.7,383.14 940.7,383.27 944.7,383.30 948.7,383.24 952.7,383.08 952.7,393.28 948.7,393.44 944.7,393.50 940.7,393.47 936.7,393.34 932.7,393.13 928.7,392.83 924.7,392.44 920.7,391.98 916.7,391.44 912.7,390.83 908.7,390.16 904.7,389.43 900.7,388.66 896.7,387.86 892.7,387.03 888.7,386.18 884.7,385.33 880.7,384.48 876.7,383.64 872.7,382.82 868.7,382.04 864.7,381.30 860.7,380.61 856.7,379.98 852.7,379.41 848.7,378.92 844.7,378.50 840.7,378.17 836.7,377.92 832.7,377.77 828.7,377.70 824.7,377.73 820.7,377.85 816.7,378.06 812.7,378.36 808.7,378.74 804.7,379.20 800.7,379.74 796.7,380.35 792.7,381.02 788.7,381.74 784.7,382.51 780.7,383.31 776.7,384.14 772.7,384.99 768.7,385.84 764.7,386.69 760.7,387.53 756.7,388.35 752.7,389.13 748.7,389.87 744.7,390.56 740.7,391.20 736.7,391.77 732.7,392.27 728.7,392.68 724.7,393.02 720.7,393.27 716.7,393.43 712.7,393.50 708.7,393.47 704.7,393.36 700.7,393.15 696.7,392.85 692.7,392.47 688.7,392.01 684.7,391.48 680.7,390.87 676.7,390.21 672.7,389.49 668.7,388.72 664.7,387.92 660.7,387.09 656.7,386.25 652.7,385.39 648.7,384.54 644.7,383.70 640.7,382.88 636.7,382.10 632.7,381.35 628.7,380.66 624.7,380.02 620.7,379.45 616.7,378.95 612.7,378.53 608.7,378.19 604.7,377.94 600.7,377.78 596.7,377.70 592.7,377.72 588.7,377.84 584.7,378.04 580.7,378.33 576.7,378.71 572.7,379.17 568.7,379.70 564.7,380.30 560.7,380.97 556.7,381.68 552.7,382.45 548.7,383.25 544.7,384.08 540.7,384.92 536.7,385.78 532.7,386.63 528.7,387.47 524.7,388.29 520.7,389.07 516.7,389.82 512.7,390.51 508.7,391.15 504.7,391.73 500.7,392.23 496.7,392.66 492.7,393.00 488.7,393.25 484.7,393.42 480.7,393.50 476.7,393.48 472.7,393.37 468.7,393.17 464.7,392.88 460.7,392.51 456.7,392.05 452.7,391.52 448.7,390.92 444.7,390.26 440.7,389.54 436.7,388.78 432.7,387.98 428.7,387.15 424.7,386.31 420.7,385.46 416.7,384.60 412.7,383.76 408.7,382.94 404.7,382.16 400.7,381.41 396.7,380.71 392.7,380.07 388.7,379.49 384.7,378.99 380.7,378.56 376.7,378.21 372.7,377.95 368.7,377.78 364.7,377.71 360.7,377.72 356.7,377.83 352.7,378.02 348.7,378.31 344.7,378.68 340.7,379.13 336.7,379.66 332.7,380.25 328.7,380.91 324.7,381.63 320.7,382.39 316.7,383.19 312.7,384.01 308.7,384.86 304.7,385.71 300.7,386.56 296.7,387.41 292.7,388.23 288.7,389.01 284.7,389.76 280.7,390.46 276.7,391.11 272.7,391.69 268.7,392.20 264.7,392.63 260.7,392.98 256.7,393.24 252.7,393.41 248.7,393.49 244.7,393.48 240.7,393.38 236.7,393.19 232.7,392.90 228.7,392.54 224.7,392.09 220.7,391.56 216.7,390.97 212.7,390.31 208.7,389.60 204.7,388.84 200.7,388.04 196.7,387.22 192.7,386.37 188.7,385.52 184.7,384.67 180.7,383.83 176.7,383.00 172.7,382.21 168.7,381.46 164.7,380.76 160.7,380.11 156.7,379.53 152.7,379.02 148.7,378.59 144.7,378.24 140.7,377.97 136.7,377.79 132.7,377.71 128.7,377.72 124.7,377.81 120.7,378.00 116.7,378.28 112.7,378.65 108.7,379.09 104.7,379.62 100.7,380.21 96.7,380.86 92.7,381.57 88.7,382.33 84.7,383.13 80.7,383.95 76.7,384.79 72.7,385.65 68.7,386.50 64.7,387.34 60.7,388.16 56.7,388.96 52.7,389.71 48.7,390.41 44.7,391.06 40.7,391.65 36.7,392.16 32.7,392.60 28.7,392.95 24.7,393.22 20.7,393.40 16.7,393.49 12.7,393.49 8.7,393.39" fill="#fff"/><polyline points="8.7,383.19 12.7,383.29 16.7,383.29 20.7,383.20 24.7,383.02 28.7,382.75 32.7,382.40 36.7,381.96 40.7,381.45 44.7,380.86 48.7,380.21 52.7,379.51 56.7,378.76 60.7,377.96 64.7,377.14 68.7,376.30 72.7,375.45 76.7,374.59 80.7,373.75 84.7,372.93 88.7,372.13 92.7,371.37 96.7,370.66 100.7,370.01 104.7,369.42 108.7,368.89 112.7,368.45 116.7,368.08 120.7,367.80 124.7,367.61 128.7,367.52 132.7,367.51 136.7,367.59 140.7,367.77 144.7,368.04 148.7,368.39 152.7,368.82 156.7,369.33 160.7,369.91 164.7,370.56 168.7,371.26 172.7,372.01 176.7,372.80 180.7,373.63 184.7,374.47 188.7,375.32 192.7,376.17 196.7,377.02 200.7,377.84 204.7,378.64 208.7,379.40 212.7,380.11 216.7,380.77 220.7,381.36 224.7,381.89 228.7,382.34 232.7,382.70 236.7,382.99 240.7,383.18 244.7,383.28 248.7,383.29 252.7,383.21 256.7,383.04 260.7,382.78 264.7,382.43 268.7,382.00 272.7,381.49 276.7,380.91 280.7,380.26 284.7,379.56 288.7,378.81 292.7,378.03 296.7,377.21 300.7,376.36 304.7,375.51 308.7,374.66 312.7,373.81 316.7,372.99 320.7,372.19 324.7,371.43 328.7,370.71 332.7,370.05 336.7,369.46 340.7,368.93 344.7,368.48 348.7,368.11 352.7,367.82 356.7,367.63 360.7,367.52 364.7,367.51 368.7,367.58 372.7,367.75 376.7,368.01 380.7,368.36 384.7,368.79 388.7,369.29 392.7,369.87 396.7,370.51 400.7,371.21 404.7,371.96 408.7,372.74 412.7,373.56 416.7,374.40 420.7,375.26 424.7,376.11 428.7,376.95 432.7,377.78 436.7,378.58 440.7,379.34 444.7,380.06 448.7,380.72 452.7,381.32 456.7,381.85 460.7,382.31 464.7,382.68 468.7,382.97 472.7,383.17 476.7,383.28 480.7,383.30 484.7,383.22 488.7,383.05 492.7,382.80 496.7,382.46 500.7,382.03 504.7,381.53 508.7,380.95 512.7,380.31 516.7,379.62 520.7,378.87 524.7,378.09 528.7,377.27 532.7,376.43 536.7,375.58 540.7,374.72 544.7,373.88 548.7,373.05 552.7,372.25 556.7,371.48 560.7,370.77 564.7,370.10 568.7,369.50 572.7,368.97 576.7,368.51 580.7,368.13 584.7,367.84 588.7,367.64 592.7,367.52 596.7,367.50 600.7,367.58 604.7,367.74 608.7,367.99 612.7,368.33 616.7,368.75 620.7,369.25 624.7,369.82 628.7,370.46 632.7,371.15 636.7,371.90 640.7,372.68 644.7,373.50 648.7,374.34 652.7,375.19 656.7,376.05 660.7,376.89 664.7,377.72 668.7,378.52 672.7,379.29 676.7,380.01 680.7,380.67 684.7,381.28 688.7,381.81 692.7,382.27 696.7,382.65 700.7,382.95 704.7,383.16 708.7,383.27 712.7,383.30 716.7,383.23 720.7,383.07 724.7,382.82 728.7,382.48 732.7,382.07 736.7,381.57 740.7,381.00 744.7,380.36 748.7,379.67 752.7,378.93 756.7,378.15 760.7,377.33 764.7,376.49 768.7,375.64 772.7,374.79 776.7,373.94 780.7,373.11 784.7,372.31 788.7,371.54 792.7,370.82 796.7,370.15 800.7,369.54 804.7,369.00 808.7,368.54 812.7,368.16 816.7,367.86 820.7,367.65 824.7,367.53 828.7,367.50 832.7,367.57 836.7,367.72 840.7,367.97 844.7,368.30 848.7,368.72 852.7,369.21 856.7,369.78 860.7,370.41 864.7,371.10 868.7,371.84 872.7,372.62 876.7,373.44 880.7,374.28 884.7,375.13 888.7,375.98 892.7,376.83 896.7,377.66 900.7,378.46 904.7,379.23 908.7,379.96 912.7,380.63 916.7,381.24 920.7,381.78 924.7,382.24 928.7,382.63 932.7,382.93 936.7,383.14 940.7,383.27 944.7,383.30 948.7,383.24 952.7,383.08" fill="none" stroke="#3c3c3c" stroke-width="1.15"/><polyline points="8.7,393.39 12.7,393.49 16.7,393.49 20.7,393.40 24.7,393.22 28.7,392.95 32.7,392.60 36.7,392.16 40.7,391.65 44.7,391.06 48.7,390.41 52.7,389.71 56.7,388.96 60.7,388.16 64.7,387.34 68.7,386.50 72.7,385.65 76.7,384.79 80.7,383.95 84.7,383.13 88.7,382.33 92.7,381.57 96.7,380.86 100.7,380.21 104.7,379.62 108.7,379.09 112.7,378.65 116.7,378.28 120.7,378.00 124.7,377.81 128.7,377.72 132.7,377.71 136.7,377.79 140.7,377.97 144.7,378.24 148.7,378.59 152.7,379.02 156.7,379.53 160.7,380.11 164.7,380.76 168.7,381.46 172.7,382.21 176.7,383.00 180.7,383.83 184.7,384.67 188.7,385.52 192.7,386.37 196.7,387.22 200.7,388.04 204.7,388.84 208.7,389.60 212.7,390.31 216.7,390.97 220.7,391.56 224.7,392.09 228.7,392.54 232.7,392.90 236.7,393.19 240.7,393.38 244.7,393.48 248.7,393.49 252.7,393.41 256.7,393.24 260.7,392.98 264.7,392.63 268.7,392.20 272.7,391.69 276.7,391.11 280.7,390.46 284.7,389.76 288.7,389.01 292.7,388.23 296.7,387.41 300.7,386.56 304.7,385.71 308.7,384.86 312.7,384.01 316.7,383.19 320.7,382.39 324.7,381.63 328.7,380.91 332.7,380.25 336.7,379.66 340.7,379.13 344.7,378.68 348.7,378.31 352.7,378.02 356.7,377.83 360.7,377.72 364.7,377.71 368.7,377.78 372.7,377.95 376.7,378.21 380.7,378.56 384.7,378.99 388.7,379.49 392.7,380.07 396.7,380.71 400.7,381.41 404.7,382.16 408.7,382.94 412.7,383.76 416.7,384.60 420.7,385.46 424.7,386.31 428.7,387.15 432.7,387.98 436.7,388.78 440.7,389.54 444.7,390.26 448.7,390.92 452.7,391.52 456.7,392.05 460.7,392.51 464.7,392.88 468.7,393.17 472.7,393.37 476.7,393.48 480.7,393.50 484.7,393.42 488.7,393.25 492.7,393.00 496.7,392.66 500.7,392.23 504.7,391.73 508.7,391.15 512.7,390.51 516.7,389.82 520.7,389.07 524.7,388.29 528.7,387.47 532.7,386.63 536.7,385.78 540.7,384.92 544.7,384.08 548.7,383.25 552.7,382.45 556.7,381.68 560.7,380.97 564.7,380.30 568.7,379.70 572.7,379.17 576.7,378.71 580.7,378.33 584.7,378.04 588.7,377.84 592.7,377.72 596.7,377.70 600.7,377.78 604.7,377.94 608.7,378.19 612.7,378.53 616.7,378.95 620.7,379.45 624.7,380.02 628.7,380.66 632.7,381.35 636.7,382.10 640.7,382.88 644.7,383.70 648.7,384.54 652.7,385.39 656.7,386.25 660.7,387.09 664.7,387.92 668.7,388.72 672.7,389.49 676.7,390.21 680.7,390.87 684.7,391.48 688.7,392.01 692.7,392.47 696.7,392.85 700.7,393.15 704.7,393.36 708.7,393.47 712.7,393.50 716.7,393.43 720.7,393.27 724.7,393.02 728.7,392.68 732.7,392.27 736.7,391.77 740.7,391.20 744.7,390.56 748.7,389.87 752.7,389.13 756.7,388.35 760.7,387.53 764.7,386.69 768.7,385.84 772.7,384.99 776.7,384.14 780.7,383.31 784.7,382.51 788.7,381.74 792.7,381.02 796.7,380.35 800.7,379.74 804.7,379.20 808.7,378.74 812.7,378.36 816.7,378.06 820.7,377.85 824.7,377.73 828.7,377.70 832.7,377.77 836.7,377.92 840.7,378.17 844.7,378.50 848.7,378.92 852.7,379.41 856.7,379.98 860.7,380.61 864.7,381.30 868.7,382.04 872.7,382.82 876.7,383.64 880.7,384.48 884.7,385.33 888.7,386.18 892.7,387.03 896.7,387.86 900.7,388.66 904.7,389.43 908.7,390.16 912.7,390.83 916.7,391.44 920.7,391.98 924.7,392.44 928.7,392.83 932.7,393.13 936.7,393.34 940.7,393.47 944.7,393.50 948.7,393.44 952.7,393.28" fill="none" stroke="#3c3c3c" stroke-width="1.15"/></svg>
<svg style="position:absolute;left:702.8px;top:525.3px" width="9.2" height="10.2" viewBox="0 0 9.2 10.2"><rect x="0.5" y="0.5" width="8.2" height="9.2" rx="1.2" fill="#fff" stroke="#8d847e" stroke-width="0.9"/><rect x="0.5" y="0.5" width="8.2" height="2" fill="#8d847e"/><g fill="#a39b95"><rect x="1.9" y="4.3" width="1.3" height="1.1"/><rect x="3.95" y="4.3" width="1.3" height="1.1"/><rect x="6" y="4.3" width="1.3" height="1.1"/><rect x="1.9" y="6.6" width="1.3" height="1.1"/><rect x="3.95" y="6.6" width="1.3" height="1.1"/><rect x="6" y="6.6" width="1.3" height="1.1"/></g></svg>
<div class="t lk" style="left:714.50px;top:523.20px;width:70.00px;height:16.00px;line-height:16.00px;text-align:left;"><u>日別明細確認&nbsp;</u></div>
<svg style="position:absolute;left:785px;top:526px" width="9.4" height="9.4" viewBox="0 0 9.4 9.4"><circle cx="4.7" cy="4.7" r="4" fill="#fff" stroke="#777" stroke-width="0.8"/><text x="4.7" y="7" font-size="6.4" text-anchor="middle" fill="#666" font-family="Liberation Sans, sans-serif">?</text></svg>
<div class="t lk pa" style="left:795.20px;top:523.20px;width:80.00px;height:16.00px;line-height:16.00px;text-align:left;"><u>計算方法<span style="letter-spacing:-1.75px">について</span></u></div>
<div class="r" style="left:8.30px;top:540.70px;width:350.70px;height:54.90px;background:#eeeeee;"></div>
<div class="r" style="left:8.30px;top:595.60px;width:350.70px;height:18.70px;background:#fff;"></div>
<div class="r" style="left:8.30px;top:540.20px;width:350.70px;height:1.00px;background:rgba(0,0,0,0.185);"></div>
<div class="r" style="left:8.30px;top:595.10px;width:350.70px;height:1.00px;background:rgba(0,0,0,0.185);"></div>
<div class="r" style="left:8.30px;top:613.80px;width:350.70px;height:1.00px;background:rgba(0,0,0,0.185);"></div>
<div class="r" style="left:7.80px;top:540.70px;width:1.00px;height:73.60px;background:rgba(0,0,0,0.185);"></div>
<div class="r" style="left:358.50px;top:540.70px;width:1.00px;height:73.60px;background:rgba(0,0,0,0.185);"></div>
<div class="r" style="left:43.20px;top:540.70px;width:1.00px;height:73.60px;background:rgba(0,0,0,0.185);"></div>
<div class="r" style="left:78.90px;top:540.70px;width:1.00px;height:73.60px;background:rgba(0,0,0,0.185);"></div>
<div class="r" style="left:221.50px;top:540.70px;width:1.00px;height:73.60px;background:rgba(0,0,0,0.185);"></div>
<div class="r" style="left:257.00px;top:540.70px;width:1.00px;height:73.60px;background:rgba(0,0,0,0.185);"></div>
<div class="r" style="left:149.80px;top:559.20px;width:1.00px;height:55.10px;background:rgba(0,0,0,0.185);"></div>
<div class="r" style="left:307.80px;top:559.20px;width:1.00px;height:55.10px;background:rgba(0,0,0,0.185);"></div>
<div class="r" style="left:114.30px;top:577.30px;width:1.00px;height:37.00px;background:rgba(0,0,0,0.185);"></div>
<div class="r" style="left:186.10px;top:577.30px;width:1.00px;height:37.00px;background:rgba(0,0,0,0.185);"></div>
<div class="r" style="left:79.40px;top:558.70px;width:142.60px;height:1.00px;background:rgba(0,0,0,0.185);"></div>
<div class="r" style="left:79.40px;top:576.80px;width:142.60px;height:1.00px;background:rgba(0,0,0,0.185);"></div>
<div class="r" style="left:257.50px;top:558.70px;width:101.50px;height:1.00px;background:rgba(0,0,0,0.185);"></div>
<div class="t " style="left:8.30px;top:541.50px;width:35.40px;height:54.90px;line-height:54.90px;text-align:center;"><span class="ml">出勤<br>日数</span></div>
<div class="t " style="left:43.70px;top:541.50px;width:35.70px;height:54.90px;line-height:54.90px;text-align:center;"><span class="ml">欠勤<br>日数</span></div>
<div class="t " style="left:79.40px;top:541.50px;width:142.60px;height:18.50px;line-height:18.50px;text-align:center;">年次有給休暇</div>
<div class="t " style="left:79.40px;top:560.00px;width:70.90px;height:18.10px;line-height:18.10px;text-align:center;">取得</div>
<div class="t " style="left:150.30px;top:560.00px;width:71.70px;height:18.10px;line-height:18.10px;text-align:center;">残数</div>
<div class="t " style="left:79.40px;top:578.10px;width:35.40px;height:18.30px;line-height:18.30px;text-align:center;">日数</div>
<div class="t " style="left:114.80px;top:578.10px;width:35.50px;height:18.30px;line-height:18.30px;text-align:center;">時間</div>
<div class="t " style="left:150.30px;top:578.10px;width:36.30px;height:18.30px;line-height:18.30px;text-align:center;">日数</div>
<div class="t " style="left:186.60px;top:578.10px;width:35.40px;height:18.30px;line-height:18.30px;text-align:center;">時間</div>
<div class="t " style="left:222.00px;top:541.50px;width:35.50px;height:54.90px;line-height:54.90px;text-align:center;"><span class="ml">代休<br>日数</span></div>
<div class="t " style="left:257.50px;top:541.50px;width:101.50px;height:18.50px;line-height:18.50px;text-align:center;">特休日数</div>
<div class="t " style="left:257.50px;top:560.00px;width:50.80px;height:36.40px;line-height:36.40px;text-align:center;">有給</div>
<div class="t " style="left:308.30px;top:560.00px;width:50.70px;height:36.40px;line-height:36.40px;text-align:center;">無給</div>
<div class="t n" style="left:8.30px;top:596.20px;width:33.00px;height:18.70px;line-height:18.70px;text-align:right;">5日</div>
<div class="t n" style="left:79.40px;top:596.20px;width:33.00px;height:18.70px;line-height:18.70px;text-align:right;">0日</div>
<div class="t n" style="left:114.80px;top:596.20px;width:33.10px;height:18.70px;line-height:18.70px;text-align:right;">0<i>h</i></div>
<div class="t n" style="left:150.30px;top:596.20px;width:33.90px;height:18.70px;line-height:18.70px;text-align:right;">12.5日</div>
<div class="t n" style="left:186.60px;top:596.20px;width:33.00px;height:18.70px;line-height:18.70px;text-align:right;">4<i>h</i></div>
<div class="t n" style="left:222.00px;top:596.20px;width:33.10px;height:18.70px;line-height:18.70px;text-align:right;">0日</div>
<div class="t n" style="left:257.50px;top:596.20px;width:48.40px;height:18.70px;line-height:18.70px;text-align:right;">0日</div>
<div class="t n" style="left:308.30px;top:596.20px;width:48.30px;height:18.70px;line-height:18.70px;text-align:right;">0日</div>
<div class="r" style="left:362.40px;top:540.70px;width:71.10px;height:54.90px;background:#eeeeee;"></div>
<div class="r" style="left:362.40px;top:595.60px;width:71.10px;height:18.70px;background:#fff;"></div>
<div class="r" style="left:362.40px;top:540.20px;width:71.10px;height:1.00px;background:rgba(0,0,0,0.185);"></div>
<div class="r" style="left:362.40px;top:595.10px;width:71.10px;height:1.00px;background:rgba(0,0,0,0.185);"></div>
<div class="r" style="left:362.40px;top:613.80px;width:71.10px;height:1.00px;background:rgba(0,0,0,0.185);"></div>
<div class="r" style="left:361.90px;top:540.70px;width:1.00px;height:73.60px;background:rgba(0,0,0,0.185);"></div>
<div class="r" style="left:433.00px;top:540.70px;width:1.00px;height:73.60px;background:rgba(0,0,0,0.185);"></div>
<div class="r" style="left:396.90px;top:540.70px;width:1.00px;height:73.60px;background:rgba(0,0,0,0.185);"></div>
<div class="t " style="left:362.40px;top:541.50px;width:35.00px;height:54.90px;line-height:54.90px;text-align:center;"><span class="ml">法定<br>休日</span></div>
<div class="t " style="left:397.40px;top:541.50px;width:36.10px;height:54.90px;line-height:54.90px;text-align:center;"><span class="ml">法外<br>休日</span></div>
<div class="t n" style="left:362.40px;top:596.20px;width:32.60px;height:18.70px;line-height:18.70px;text-align:right;">5日</div>
<div class="t n" style="left:397.40px;top:596.20px;width:33.70px;height:18.70px;line-height:18.70px;text-align:right;">6日</div>
<div class="r" style="left:435.80px;top:540.70px;width:48.80px;height:54.90px;background:#eeeeee;"></div>
<div class="r" style="left:435.80px;top:595.60px;width:48.80px;height:18.70px;background:#fff;"></div>
<div class="r" style="left:435.80px;top:540.20px;width:48.80px;height:1.00px;background:rgba(0,0,0,0.185);"></div>
<div class="r" style="left:435.80px;top:595.10px;width:48.80px;height:1.00px;background:rgba(0,0,0,0.185);"></div>
<div class="r" style="left:435.80px;top:613.80px;width:48.80px;height:1.00px;background:rgba(0,0,0,0.185);"></div>
<div class="r" style="left:435.30px;top:540.70px;width:1.00px;height:73.60px;background:rgba(0,0,0,0.185);"></div>
<div class="r" style="left:484.10px;top:540.70px;width:1.00px;height:73.60px;background:rgba(0,0,0,0.185);"></div>
<div class="t " style="left:435.80px;top:541.50px;width:48.80px;height:54.90px;line-height:54.90px;text-align:center;">所定労働</div>
<div class="t n" style="left:435.80px;top:596.20px;width:46.40px;height:18.70px;line-height:18.70px;text-align:right;">40<i>h</i>00<i>m</i></div>
<div class="r" style="left:487.20px;top:540.70px;width:378.90px;height:54.90px;background:#eeeeee;"></div>
<div class="r" style="left:487.20px;top:595.60px;width:378.90px;height:18.70px;background:#fff;"></div>
<div class="r" style="left:487.20px;top:540.20px;width:378.90px;height:1.00px;background:rgba(0,0,0,0.185);"></div>
<div class="r" style="left:487.20px;top:595.10px;width:378.90px;height:1.00px;background:rgba(0,0,0,0.185);"></div>
<div class="r" style="left:487.20px;top:613.80px;width:378.90px;height:1.00px;background:rgba(0,0,0,0.185);"></div>
<div class="r" style="left:486.70px;top:540.70px;width:1.00px;height:73.60px;background:rgba(0,0,0,0.185);"></div>
<div class="r" style="left:865.60px;top:540.70px;width:1.00px;height:73.60px;background:rgba(0,0,0,0.185);"></div>
<div class="r" style="left:535.20px;top:540.70px;width:1.00px;height:73.60px;background:rgba(0,0,0,0.185);"></div>
<div class="r" style="left:593.70px;top:540.70px;width:1.00px;height:73.60px;background:rgba(0,0,0,0.185);"></div>
<div class="r" style="left:807.00px;top:540.70px;width:1.00px;height:73.60px;background:rgba(0,0,0,0.185);"></div>
<div class="r" style="left:642.20px;top:559.20px;width:1.00px;height:55.10px;background:rgba(0,0,0,0.185);"></div>
<div class="r" style="left:700.90px;top:577.30px;width:1.00px;height:37.00px;background:rgba(0,0,0,0.185);"></div>
<div class="r" style="left:759.10px;top:577.30px;width:1.00px;height:37.00px;background:rgba(0,0,0,0.185);"></div>
<div class="r" style="left:594.20px;top:558.70px;width:213.30px;height:1.00px;background:rgba(0,0,0,0.185);"></div>
<div class="r" style="left:642.70px;top:576.80px;width:164.80px;height:1.00px;background:rgba(0,0,0,0.185);"></div>
<div class="t " style="left:487.20px;top:541.50px;width:48.50px;height:54.90px;line-height:54.90px;text-align:center;"><span class="ml">実労働<br>時間</span></div>
<div class="t " style="left:535.70px;top:541.50px;width:58.50px;height:54.90px;line-height:54.90px;text-align:center;"><span class="ml" style="line-height:13px">総労働時間<br><span style="font-size:8.6px">(有休等含む)</span></span></div>
<div class="t pa" style="left:594.20px;top:541.10px;width:213.30px;height:18.50px;line-height:18.50px;text-align:center;font-size:8.4px">※各種労働時間<span class="k">の</span>詳細<span class="k">は</span> <u class="lk k">こちら</u> <span class="k">をご</span>確認下<span class="k">さい</span></div>
<div class="t " style="left:594.20px;top:560.00px;width:48.50px;height:36.40px;line-height:36.40px;text-align:center;"><span class="ml">所定内<br>労働</span></div>
<div class="t " style="left:642.70px;top:560.00px;width:164.80px;height:18.10px;line-height:18.10px;text-align:center;">所定外労働</div>
<div class="t " style="left:642.70px;top:578.10px;width:58.70px;height:18.30px;line-height:18.30px;text-align:center;">法定内残業</div>
<div class="t " style="left:701.40px;top:578.10px;width:58.20px;height:18.30px;line-height:18.30px;text-align:center;">法定外残業</div>
<div class="t " style="left:759.60px;top:578.10px;width:47.90px;height:18.30px;line-height:18.30px;text-align:center;">休日労働</div>
<div class="t " style="left:807.50px;top:541.50px;width:58.60px;height:54.90px;line-height:54.90px;text-align:center;">深夜労働</div>
<div class="t n" style="left:487.20px;top:596.20px;width:46.10px;height:18.70px;line-height:18.70px;text-align:right;">43<i>h</i>45<i>m</i></div>
<div class="t n" style="left:535.70px;top:596.20px;width:56.10px;height:18.70px;line-height:18.70px;text-align:right;">43<i>h</i>45<i>m</i></div>
<div class="t n" style="left:594.20px;top:596.20px;width:46.10px;height:18.70px;line-height:18.70px;text-align:right;">39<i>h</i>30<i>m</i></div>
<div class="t n" style="left:642.70px;top:596.20px;width:56.30px;height:18.70px;line-height:18.70px;text-align:right;">0<i>h</i>00<i>m</i></div>
<div class="t n" style="left:701.40px;top:596.20px;width:55.80px;height:18.70px;line-height:18.70px;text-align:right;">4<i>h</i>15<i>m</i></div>
<div class="t n" style="left:759.60px;top:596.20px;width:45.50px;height:18.70px;line-height:18.70px;text-align:right;">0<i>h</i>00<i>m</i></div>
<div class="t n" style="left:807.50px;top:596.20px;width:56.20px;height:18.70px;line-height:18.70px;text-align:right;">0<i>h</i>00<i>m</i></div>
<div class="r" style="left:8.30px;top:623.60px;width:70.90px;height:35.80px;background:#eeeeee;"></div>
<div class="r" style="left:8.30px;top:659.40px;width:70.90px;height:19.00px;background:#fff;"></div>
<div class="r" style="left:8.30px;top:623.10px;width:70.90px;height:1.00px;background:rgba(0,0,0,0.185);"></div>
<div class="r" style="left:8.30px;top:641.00px;width:70.90px;height:1.00px;background:rgba(0,0,0,0.185);"></div>
<div class="r" style="left:8.30px;top:658.90px;width:70.90px;height:1.00px;background:rgba(0,0,0,0.185);"></div>
<div class="r" style="left:8.30px;top:677.90px;width:70.90px;height:1.00px;background:rgba(0,0,0,0.185);"></div>
<div class="r" style="left:7.80px;top:623.60px;width:1.00px;height:54.80px;background:rgba(0,0,0,0.185);"></div>
<div class="r" style="left:78.70px;top:623.60px;width:1.00px;height:54.80px;background:rgba(0,0,0,0.185);"></div>
<div class="r" style="left:43.20px;top:641.50px;width:1.00px;height:36.90px;background:rgba(0,0,0,0.185);"></div>
<div class="t " style="left:8.30px;top:624.40px;width:70.90px;height:17.90px;line-height:17.90px;text-align:center;">遅刻早退</div>
<div class="t " style="left:8.30px;top:642.30px;width:35.40px;height:17.90px;line-height:17.90px;text-align:center;">回数</div>
<div class="t " style="left:43.70px;top:642.30px;width:35.50px;height:17.90px;line-height:17.90px;text-align:center;">時間</div>
<div class="t n" style="left:8.30px;top:660.00px;width:33.00px;height:19.00px;line-height:19.00px;text-align:right;">0回</div>
<div class="t n" style="left:43.70px;top:660.00px;width:33.10px;height:19.00px;line-height:19.00px;text-align:right;">0<i>h</i>00<i>m</i></div>
<div class="r" style="left:78.20px;top:619.90px;width:104.10px;height:60.00px;background:#fff;"></div>
<div class="r" style="left:82.20px;top:623.20px;width:97.60px;height:36.20px;background:#eeeeee;"></div>
<div class="r" style="left:82.20px;top:622.70px;width:97.60px;height:1.00px;background:rgba(0,0,0,0.185);"></div>
<div class="r" style="left:82.20px;top:658.90px;width:97.60px;height:1.00px;background:rgba(0,0,0,0.185);"></div>
<div class="r" style="left:82.20px;top:677.90px;width:97.60px;height:1.00px;background:rgba(0,0,0,0.185);"></div>
<div class="r" style="left:81.70px;top:623.20px;width:1.00px;height:55.20px;background:rgba(0,0,0,0.185);"></div>
<div class="r" style="left:130.00px;top:623.20px;width:1.00px;height:55.20px;background:rgba(0,0,0,0.185);"></div>
<div class="r" style="left:179.30px;top:623.20px;width:1.00px;height:55.20px;background:rgba(0,0,0,0.185);"></div>
<div class="t " style="left:82.20px;top:624.00px;width:48.30px;height:36.20px;line-height:36.20px;text-align:center;">午前</div>
<div class="t " style="left:130.50px;top:624.00px;width:49.30px;height:36.20px;line-height:36.20px;text-align:center;">午後</div>
<div class="t n" style="left:82.20px;top:660.00px;width:46.10px;height:19.00px;line-height:19.00px;text-align:right;">15h00m</div>
<div class="t n" style="left:130.50px;top:660.00px;width:47.10px;height:19.00px;line-height:19.00px;text-align:right;">28h45m</div>
<div style="position:absolute;left:859.5px;top:36.2px;width:9.2px;height:9.2px;box-sizing:border-box;border:1px solid #6e6e6e;border-radius:1.8px;background:#fff"></div>
<div class="t pa" style="left:872.00px;top:33.20px;width:90.00px;height:16.00px;line-height:16.00px;text-align:left;color:#333">IP<span class="k2">アドレスを</span>表示<span class="k2">する</span></div>
<div class="hl" style="left:267.40px;top:304.60px;width:86.10px;height:38.20px;border-width:7px;border-radius:8px"></div>
<div class="hl" style="left:411.70px;top:305.60px;width:82.40px;height:37.20px;border-width:7px;border-radius:8px"></div>
<div class="hl" style="left:843.60px;top:20.30px;width:121.40px;height:35.70px;border-width:7px;border-radius:8px"></div>
<div class="hl" style="left:71.20px;top:612.90px;width:117.60px;height:73.80px;border-width:7px;border-radius:9px"></div>
<div class="hl" style="left:691.40px;top:512.20px;width:96.80px;height:33.40px;border-width:7px;border-radius:8px"></div>
<div class="lb" style="left:252.60px;top:281.50px;width:43.6px;height:29.8px"></div>
<div class="lt" style="left:243.80px;top:282.50px;width:60px;height:30px;line-height:30px"><span class="p l">（</span><b style="font-size:20.5px;top:0px">a</b><span class="p r">）</span></div>
<div class="lb" style="left:392.40px;top:281.50px;width:41.6px;height:29.8px"></div>
<div class="lt" style="left:382.70px;top:282.70px;width:60px;height:30px;line-height:30px"><span class="p l">（</span><b style="font-size:20.5px;top:0px">a</b><span class="p r">）</span></div>
<div class="lb" style="left:804.40px;top:25.20px;width:42.5px;height:30px"></div>
<div class="lt" style="left:795.65px;top:24.20px;width:60px;height:30px;line-height:30px"><span class="p l">（</span><b style="font-size:19.2px;top:-1.6px">b</b><span class="p r">）</span></div>
<div class="lb" style="left:60.00px;top:590.20px;width:38px;height:29.4px"></div>
<div class="lt" style="left:46.75px;top:590.80px;width:60px;height:30px;line-height:30px"><span class="p l">（</span><b style="font-size:20.5px;top:0px">c</b><span class="p r">）</span></div>
<div class="lb" style="left:677.00px;top:490.60px;width:35px;height:30px"></div>
<div class="lt" style="left:664.20px;top:491.80px;width:60px;height:30px;line-height:30px"><span class="p l">（</span><b style="font-size:19.2px;top:-0.4px">d</b><span class="p r">）</span></div>
</body></html>
